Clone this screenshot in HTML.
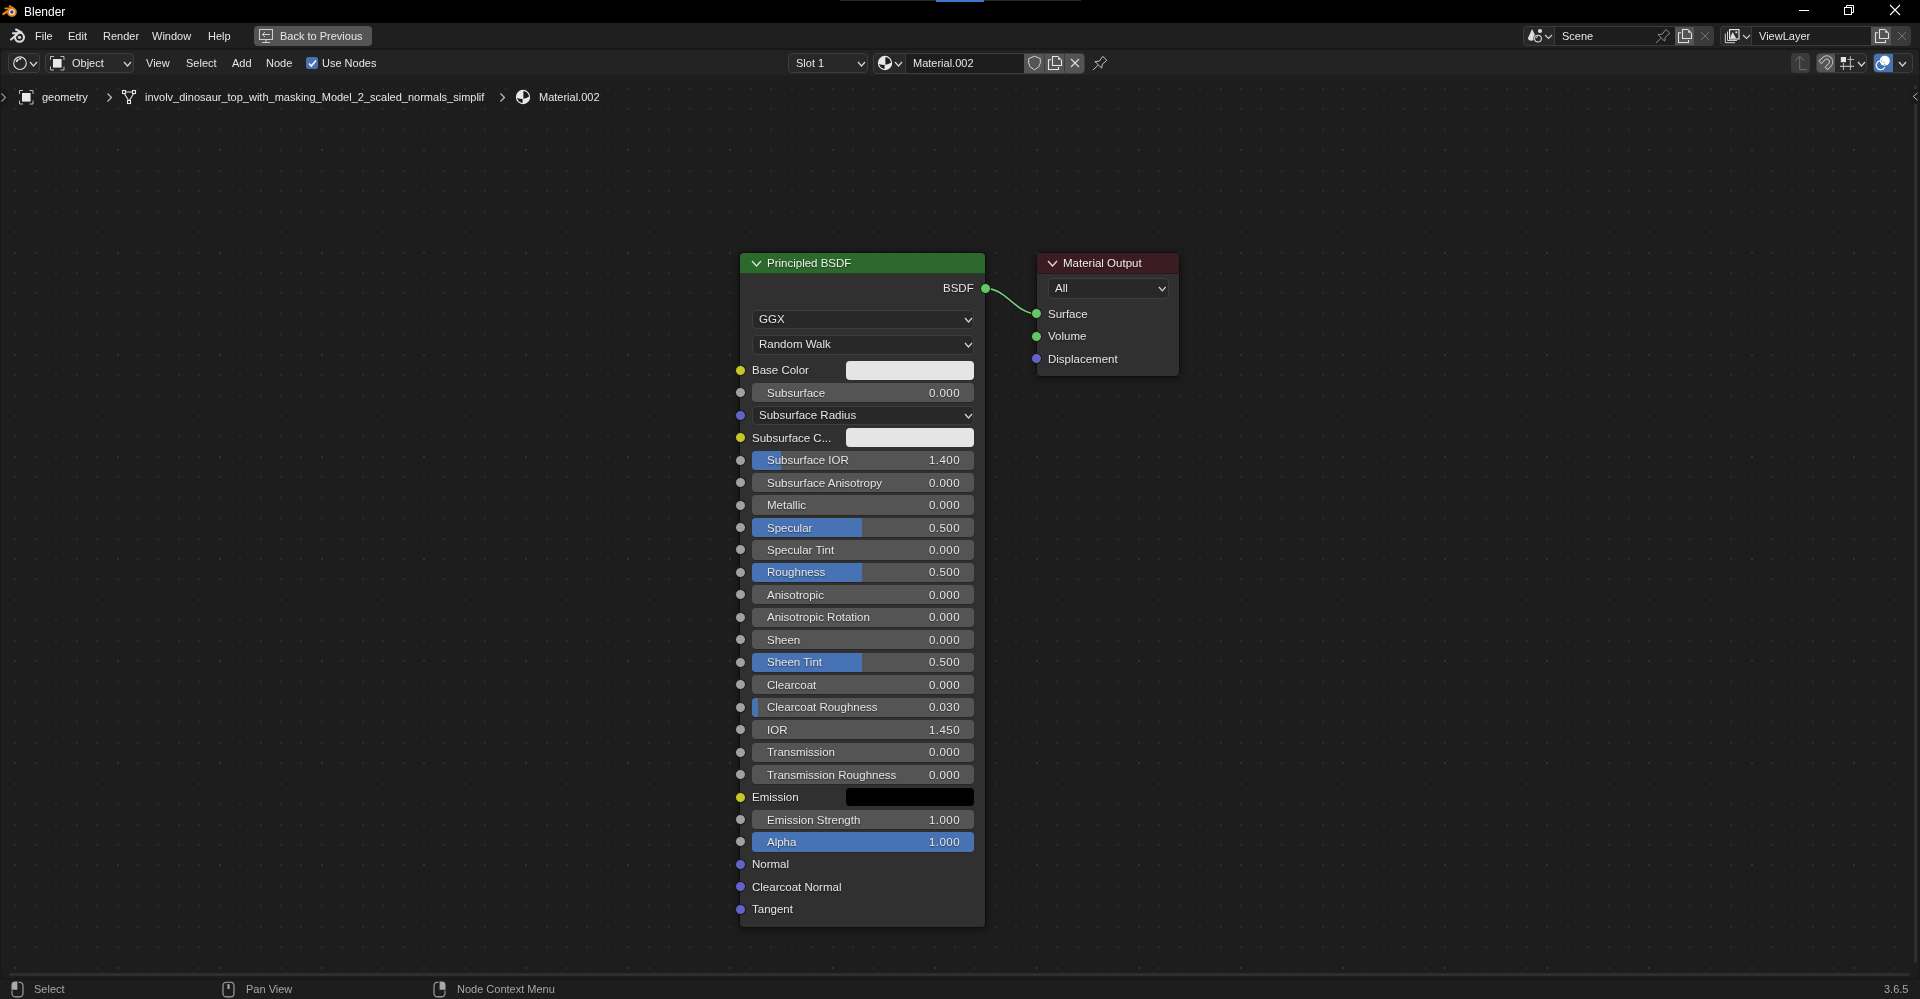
<!DOCTYPE html>
<html><head><meta charset="utf-8"><style>
html,body{margin:0;padding:0;width:1920px;height:999px;overflow:hidden;background:#181818;font-family:"Liberation Sans",sans-serif;}
.a{position:absolute;display:block}
.t{position:absolute;white-space:nowrap;color:#e6e6e6;will-change:transform;}
</style></head><body>
<div class="a" style="left:0px;top:0px;width:1920.00px;height:22.50px;background:#000;border-radius:0px;"></div>
<div class="a" style="left:840px;top:0px;width:241.00px;height:1.00px;background:#2a2a2a;border-radius:0px;"></div>
<div class="a" style="left:936px;top:0px;width:48.00px;height:1.50px;background:#3a78c8;border-radius:0px;"></div>
<svg class="a" style="left:0px;top:2px;" width="22" height="18" viewBox="0 0 22 18"><g stroke="#e2801c" stroke-linecap="round"><path d="M3.4 12 L9.8 7.6" stroke-width="2.3"/><path d="M5.3 6.4 L11 6.4" stroke-width="1.9"/><path d="M9.6 4 L13.2 6.2" stroke-width="1.9"/></g>
<circle cx="11.9" cy="10.1" r="4.9" fill="#e2801c"/><circle cx="11.9" cy="10.1" r="2.9" fill="#fff4e0"/><circle cx="11.9" cy="10.1" r="1.8" fill="#22507f"/></svg>
<div class="t" style="left:23.5px;top:6px;font-size:12px;line-height:12px;color:#ffffff;">Blender</div>
<div class="a" style="left:1799px;top:10px;width:10.00px;height:1.00px;background:#fff;border-radius:0px;"></div>
<svg class="a" style="left:1843px;top:4px;" width="13" height="12" viewBox="0 0 13 12"><g fill="none" stroke="#fff" stroke-width="1"><rect x="1.5" y="3.5" width="7" height="7"/><path d="M3.5 3.5 V1.5 H10.5 V8.5 H8.5"/></g></svg>
<svg class="a" style="left:1889px;top:4px;" width="13" height="13" viewBox="0 0 13 13"><g stroke="#fff" stroke-width="1.1"><path d="M1 1 L11 11 M11 1 L1 11"/></g></svg>
<div class="a" style="left:0px;top:22.5px;width:1920.00px;height:25.50px;background:#1f1f1f;border-radius:0px;"></div>
<svg class="a" style="left:8px;top:27px;" width="20" height="17" viewBox="0 0 20 17"><g fill="none" stroke="#dcdcdc" stroke-width="2.1" stroke-linecap="round"><circle cx="11.5" cy="10.3" r="4.5"/><path d="M3 12.5 L9 7.5"/><path d="M5 6.3 L10.5 6.3"/><path d="M8 2.5 L13.5 5.5"/></g><circle cx="11.5" cy="10.3" r="1.6" fill="#dcdcdc"/></svg>
<div class="t" style="left:35.4px;top:31px;font-size:11px;line-height:11px;color:#e6e6e6;">File</div>
<div class="t" style="left:68.2px;top:31px;font-size:11px;line-height:11px;color:#e6e6e6;">Edit</div>
<div class="t" style="left:102.6px;top:31px;font-size:11px;line-height:11px;color:#e6e6e6;">Render</div>
<div class="t" style="left:152px;top:31px;font-size:11px;line-height:11px;color:#e6e6e6;">Window</div>
<div class="t" style="left:207.5px;top:31px;font-size:11px;line-height:11px;color:#e6e6e6;">Help</div>
<div class="a" style="left:254.4px;top:26.2px;width:117.20px;height:19.60px;background:#545454;border-radius:4px;"></div>
<svg class="a" style="left:258px;top:28px;" width="17" height="16" viewBox="0 0 17 16"><g fill="none" stroke="#cfcfcf" stroke-width="1"><rect x="1.5" y="1.5" width="13" height="10"/><path d="M8 11.5 V14.5 M4 14.5 H12"/><path d="M12 6.5 H4.5 M7 4 L4.5 6.5 L7 9"/></g></svg>
<div class="t" style="left:280.4px;top:31px;font-size:11px;line-height:11px;color:#e6e6e6;">Back to Previous</div>
<div class="a" style="left:1523px;top:26.1px;width:191.00px;height:19.60px;background:#3a3a3a;border-radius:4px;"></div>
<div class="a" style="left:1524px;top:27.1px;width:30.50px;height:17.60px;background:#282828;border-radius:3px;border-top-right-radius:0;border-bottom-right-radius:0;"></div>
<div class="a" style="left:1554.5px;top:27.1px;width:120.00px;height:17.60px;background:#1d1d1d;border-radius:0px;"></div>
<div class="a" style="left:1554.0px;top:27.1px;width:1.00px;height:17.60px;background:#3a3a3a;border-radius:0px;"></div>
<div class="a" style="left:1674.5px;top:27.1px;width:19.80px;height:17.60px;background:#545454;border-radius:0px;"></div>
<div class="a" style="left:1694.3px;top:27.1px;width:18.70px;height:17.60px;background:#3a3a3a;border-radius:3px;border-top-left-radius:0;border-bottom-left-radius:0;"></div>
<svg class="a" style="left:1526px;top:27px" width="18" height="17" viewBox="0 0 18 17"><path d="M6 2 L1.8 11.5 Q2.5 13.8 5.5 13.8 Q7.5 13.6 8.5 12.5 L9.5 9 Z" fill="#dcdcdc"/><circle cx="14" cy="4" r="2.1" fill="#dcdcdc"/><circle cx="12" cy="11.6" r="4.6" fill="#282828"/><circle cx="12" cy="11.6" r="3.4" fill="none" stroke="#dcdcdc" stroke-width="1.1"/><path d="M10.3 11 A1.8 1.8 0 0 1 12 9.6" stroke="#dcdcdc" fill="none" stroke-width="0.9"/></svg>
<svg class="a" style="left:1544.2px;top:34px;" width="9" height="6" viewBox="0 0 9 6"><path d="M1 1 L4.5 4.5 L8 1" fill="none" stroke="#d0d0d0" stroke-width="1.1"/></svg>
<div class="t" style="left:1562px;top:31px;font-size:11px;line-height:11px;color:#e6e6e6;">Scene</div>
<svg class="a" style="left:1677.0px;top:28px;" width="16" height="16" viewBox="0 0 16 16"><g fill="none" stroke="#e0e0e0" stroke-width="1.1"><path d="M4 4.8 H1.5 V14.5 H11.5 V12"/><path d="M11.2 1.5 H5.5 V10.5 H14.5 V4.8"/></g><path d="M11.2 1.2 L14.8 4.8 H11.2 Z" fill="#e0e0e0"/></svg>
<svg class="a" style="left:1699.8999999999999px;top:31px;" width="11" height="11" viewBox="0 0 11 11"><path d="M1 1 L9 9 M9 1 L1 9" stroke="#747474" stroke-width="1"/></svg>
<svg class="a" style="left:1654.0px;top:26.799999999999997px;" width="18" height="18" viewBox="0 0 18 18"><g fill="none" stroke="#8c8c8c" stroke-width="1" stroke-linejoin="round" transform="translate(2 16)"><path d="M0 0 L4.8 -4.6"/><path d="M2 -8.4 L6.3 -8.9 L9.8 -13.6 L13.9 -9.7 L9.4 -5.9 L8.6 -1.8 Z"/></g></svg>
<div class="a" style="left:1720.3px;top:26.1px;width:191.10px;height:19.60px;background:#3a3a3a;border-radius:4px;"></div>
<div class="a" style="left:1721.3px;top:27.1px;width:30.50px;height:17.60px;background:#282828;border-radius:3px;border-top-right-radius:0;border-bottom-right-radius:0;"></div>
<div class="a" style="left:1751.8px;top:27.1px;width:119.50px;height:17.60px;background:#1d1d1d;border-radius:0px;"></div>
<div class="a" style="left:1751.3px;top:27.1px;width:1.00px;height:17.60px;background:#3a3a3a;border-radius:0px;"></div>
<div class="a" style="left:1871.3px;top:27.1px;width:19.70px;height:17.60px;background:#545454;border-radius:0px;"></div>
<div class="a" style="left:1891px;top:27.1px;width:19.40px;height:17.60px;background:#3a3a3a;border-radius:3px;border-top-left-radius:0;border-bottom-left-radius:0;"></div>
<svg class="a" style="left:1723px;top:28px" width="18" height="16" viewBox="0 0 18 16"><g fill="none" stroke="#d0d0d0" stroke-width="1"><path d="M4.5 3.5 V12.5 H14"/><path d="M2.3 5.5 V14.7 H12"/></g><rect x="6.6" y="1.6" width="9.4" height="9.4" fill="none" stroke="#e2e2e2" stroke-width="1.2"/><path d="M7 10.6 L9.6 4 L13.2 10.6 Z" fill="#e2e2e2"/><rect x="12.4" y="3.4" width="1.9" height="1.9" fill="#e2e2e2"/></svg>
<svg class="a" style="left:1741.5px;top:34px;" width="9" height="6" viewBox="0 0 9 6"><path d="M1 1 L4.5 4.5 L8 1" fill="none" stroke="#d0d0d0" stroke-width="1.1"/></svg>
<div class="t" style="left:1758.8px;top:31px;font-size:11px;line-height:11px;color:#e6e6e6;">ViewLayer</div>
<svg class="a" style="left:1873.8px;top:28px;" width="16" height="16" viewBox="0 0 16 16"><g fill="none" stroke="#e0e0e0" stroke-width="1.1"><path d="M4 4.8 H1.5 V14.5 H11.5 V12"/><path d="M11.2 1.5 H5.5 V10.5 H14.5 V4.8"/></g><path d="M11.2 1.2 L14.8 4.8 H11.2 Z" fill="#e0e0e0"/></svg>
<svg class="a" style="left:1896.6px;top:31px;" width="11" height="11" viewBox="0 0 11 11"><path d="M1 1 L9 9 M9 1 L1 9" stroke="#747474" stroke-width="1"/></svg>
<div class="a" style="left:1.2px;top:49.8px;width:1917.60px;height:25.20px;background:#232323;border-radius:4px;border-bottom-left-radius:0;border-bottom-right-radius:0;"></div>
<div class="a" style="left:8.4px;top:53.3px;width:29.40px;height:17.30px;background:#282828;border:1px solid #3d3d3d;border-radius:4px"></div>
<svg class="a" style="left:12px;top:55px;" width="16" height="16" viewBox="0 0 16 16"><circle cx="8" cy="8.2" r="6.3" fill="none" stroke="#e0e0e0" stroke-width="1.1"/><path d="M4.3 6.9 A3.9 3.9 0 0 1 6.5 4.4" stroke="#e8e8e8" stroke-width="1.7" fill="none"/><rect x="7.3" y="2.9" width="1.8" height="1.8" fill="#e8e8e8"/></svg>
<svg class="a" style="left:29px;top:61px;" width="9" height="6" viewBox="0 0 9 6"><path d="M1 1 L4.5 5 L8 1" fill="none" stroke="#d6d6d6" stroke-width="1.2"/></svg>
<div class="a" style="left:45.2px;top:53.3px;width:86.60px;height:17.30px;background:#282828;border:1px solid #3d3d3d;border-radius:4px"></div>
<svg class="a" style="left:49px;top:55px;" width="17" height="16" viewBox="0 0 17 16"><g fill="none" stroke="#bdbdbd" stroke-width="1"><path d="M1.5 5 V1.5 H5 M11.5 1.5 H15 V5 M15 11.5 V15 H11.5 M5 15 H1.5 V11.5"/></g><rect x="4" y="4" width="8.6" height="8.6" fill="#e8e8e8"/></svg>
<div class="t" style="left:71.5px;top:58px;font-size:11px;line-height:11px;color:#e6e6e6;">Object</div>
<svg class="a" style="left:123px;top:61px;" width="9" height="6" viewBox="0 0 9 6"><path d="M1 1 L4.5 5 L8 1" fill="none" stroke="#d6d6d6" stroke-width="1.2"/></svg>
<div class="t" style="left:145.9px;top:58px;font-size:11px;line-height:11px;color:#e6e6e6;">View</div>
<div class="t" style="left:186.2px;top:58px;font-size:11px;line-height:11px;color:#e6e6e6;">Select</div>
<div class="t" style="left:231.8px;top:58px;font-size:11px;line-height:11px;color:#e6e6e6;">Add</div>
<div class="t" style="left:266.3px;top:58px;font-size:11px;line-height:11px;color:#e6e6e6;">Node</div>
<div class="a" style="left:305.6px;top:57.2px;width:12.50px;height:12.10px;background:#4772b3;border-radius:2.5px;"></div>
<svg class="a" style="left:306px;top:57px;" width="13" height="13" viewBox="0 0 13 13"><path d="M3 6.5 L5.3 9 L10 3.5" fill="none" stroke="#fff" stroke-width="1.5"/></svg>
<div class="t" style="left:322.3px;top:58px;font-size:11px;line-height:11px;color:#e6e6e6;">Use Nodes</div>
<div class="a" style="left:788.4px;top:53.3px;width:77.20px;height:17.30px;background:#282828;border:1px solid #3d3d3d;border-radius:4px"></div>
<div class="t" style="left:796.4px;top:58px;font-size:11px;line-height:11px;color:#e6e6e6;">Slot 1</div>
<svg class="a" style="left:857px;top:61px;" width="9" height="6" viewBox="0 0 9 6"><path d="M1 1 L4.5 5 L8 1" fill="none" stroke="#d6d6d6" stroke-width="1.2"/></svg>
<div class="a" style="left:873.3px;top:53.3px;width:210.0px;height:18.3px;border:1px solid #3d3d3d;border-radius:4px;background:#282828;overflow:hidden"><div class="a" style="left:30.3px;top:0;width:120px;height:19px;background:#1d1d1d;border-left:1px solid #3a3a3a"></div><div class="a" style="left:150px;top:0;width:20px;height:19px;background:#545454"></div><div class="a" style="left:170px;top:0;width:19px;height:19px;background:#545454;border-left:1px solid #3c3c3c"></div><div class="a" style="left:190px;top:0;width:20px;height:19px;background:#545454;border-left:1px solid #3c3c3c"></div></div>
<svg class="a" style="left:877px;top:55px;" width="16" height="16" viewBox="0 0 16 16"><circle cx="8" cy="8" r="6.6" fill="#e8e8e8"/><path d="M8.4 1.6 L8.4 9.65 Q11.3 9.5 14.3 7.6 A6.3 6.3 0 0 0 8.4 1.6 Z" fill="#1f1f1f"/><path d="M7.6 10 L7.6 14.3 A6.3 6.3 0 0 1 1.8 9.0 Q4.7 10 7.6 10 Z" fill="#1f1f1f"/><circle cx="8" cy="8" r="6.6" fill="none" stroke="#e8e8e8" stroke-width="1.1"/></svg>
<svg class="a" style="left:894px;top:61px;" width="9" height="6" viewBox="0 0 9 6"><path d="M1 1 L4.5 5 L8 1" fill="none" stroke="#d6d6d6" stroke-width="1.2"/></svg>
<div class="t" style="left:912.6px;top:58px;font-size:11px;line-height:11px;color:#e6e6e6;">Material.002</div>
<svg class="a" style="left:1027px;top:55px;" width="16" height="16" viewBox="0 0 16 16"><path d="M7.5 1.2 L13.3 3.6 V8 Q13.3 12.2 7.5 14.8 Q1.7 12.2 1.7 8 V3.6 Z" fill="none" stroke="#d0d0d0" stroke-width="1"/></svg>
<svg class="a" style="left:1047px;top:55px;" width="16" height="16" viewBox="0 0 16 16"><g fill="none" stroke="#e6e6e6" stroke-width="1.1"><path d="M4 4.8 H1.5 V14.5 H11.5 V12"/><path d="M11.2 1.5 H5.5 V10.5 H14.5 V4.8"/></g><path d="M11.2 1.2 L14.8 4.8 H11.2 Z" fill="#e6e6e6"/></svg>
<svg class="a" style="left:1070px;top:58px;" width="10" height="10" viewBox="0 0 10 10"><path d="M1 1 L9 9 M9 1 L1 9" stroke="#e0e0e0" stroke-width="1.1"/></svg>
<svg class="a" style="left:1091.1px;top:53.7px;" width="18" height="18" viewBox="0 0 18 18"><g fill="none" stroke="#c4c4c4" stroke-width="1" stroke-linejoin="round" transform="translate(2 16)"><path d="M0 0 L4.8 -4.6"/><path d="M2 -8.4 L6.3 -8.9 L9.8 -13.6 L13.9 -9.7 L9.4 -5.9 L8.6 -1.8 Z"/></g></svg>
<div class="a" style="left:1791.3px;top:53.3px;width:18.90px;height:19.30px;background:#3a3a3a;border-radius:4px;"></div>
<svg class="a" style="left:1793px;top:55px;" width="16" height="16" viewBox="0 0 16 16"><path d="M6.7 1.6 V14.6 H13.7 M2.1 5.8 L6.7 1.2 L10.9 5.6" fill="none" stroke="#727272" stroke-width="1"/></svg>
<div class="a" style="left:1816.3px;top:53.3px;width:49.2px;height:17.3px;border:1px solid #3d3d3d;border-radius:4px;background:#282828;overflow:hidden"><div class="a" style="left:0;top:0;width:18px;height:18px;background:#545454"></div></div>
<svg class="a" style="left:1818px;top:55px;" width="16" height="16" viewBox="0 0 16 16"><g transform="translate(8.8 6.8) rotate(45)"><path d="M-6 5 L-6 0 A6 6 0 0 1 6 0 L6 5 L2.6 5 L2.6 0 A2.6 2.6 0 0 0 -2.6 0 L-2.6 5 Z" fill="none" stroke="#bdbdbd" stroke-width="1"/></g></svg>
<svg class="a" style="left:1838px;top:55px;" width="18" height="16" viewBox="0 0 18 16"><rect x="2.8" y="2" width="5.2" height="5.2" fill="#e6e6e6"/><path d="M5.5 8 V15 M12.4 1.2 V15 M9.5 4.5 H16 M2 11.4 H16" stroke="#b4b4b4" stroke-width="1.1" fill="none"/></svg>
<svg class="a" style="left:1857px;top:61px;" width="9" height="6" viewBox="0 0 9 6"><path d="M1 1 L4.5 5 L8 1" fill="none" stroke="#d6d6d6" stroke-width="1.2"/></svg>
<div class="a" style="left:1873px;top:53.3px;width:37.7px;height:17.3px;border:1px solid #3d3d3d;border-radius:4px;background:#282828;overflow:hidden"><div class="a" style="left:0;top:0;width:18.6px;height:18px;background:#4772b3"></div></div>
<svg class="a" style="left:1875px;top:55px;" width="17" height="16" viewBox="0 0 17 16"><circle cx="9.8" cy="5.7" r="5" fill="#fff"/><path d="M5.4 5.8 A4.5 4.5 0 1 0 9.8 12.3" fill="none" stroke="#fff" stroke-width="1.15"/><path d="M5.9 5.85 A4.5 4.5 0 0 1 9.9 10.1" fill="none" stroke="#4772b3" stroke-width="0.9" stroke-dasharray="1.3 1.1"/></svg>
<svg class="a" style="left:1897.5px;top:61px;" width="9" height="6" viewBox="0 0 9 6"><path d="M1 1 L4.5 5 L8 1" fill="none" stroke="#d6d6d6" stroke-width="1.2"/></svg>
<div class="a" style="left:1.2px;top:75px;width:1917.60px;height:902.60px;background:#1d1d1d;border-radius:6px;border-top-left-radius:0;border-top-right-radius:0;"></div>
<svg class="a" style="left:0;top:0" width="1920" height="999" viewBox="0 0 1920 999" shape-rendering="crispEdges"><path fill="#292929" d="M14 88h2v2h-2zM35 88h2v2h-2zM55 88h2v2h-2zM76 88h2v2h-2zM96 88h2v2h-2zM117 88h2v2h-2zM137 88h2v2h-2zM157 88h2v2h-2zM178 88h2v2h-2zM198 88h2v2h-2zM219 88h2v2h-2zM239 88h2v2h-2zM260 88h2v2h-2zM280 88h2v2h-2zM300 88h2v2h-2zM321 88h2v2h-2zM341 88h2v2h-2zM362 88h2v2h-2zM382 88h2v2h-2zM403 88h2v2h-2zM423 88h2v2h-2zM443 88h2v2h-2zM464 88h2v2h-2zM484 88h2v2h-2zM505 88h2v2h-2zM525 88h2v2h-2zM546 88h2v2h-2zM566 88h2v2h-2zM586 88h2v2h-2zM607 88h2v2h-2zM627 88h2v2h-2zM648 88h2v2h-2zM668 88h2v2h-2zM689 88h2v2h-2zM709 88h2v2h-2zM729 88h2v2h-2zM750 88h2v2h-2zM770 88h2v2h-2zM791 88h2v2h-2zM811 88h2v2h-2zM832 88h2v2h-2zM852 88h2v2h-2zM872 88h2v2h-2zM893 88h2v2h-2zM913 88h2v2h-2zM934 88h2v2h-2zM954 88h2v2h-2zM974 88h2v2h-2zM995 88h2v2h-2zM1015 88h2v2h-2zM1036 88h2v2h-2zM1056 88h2v2h-2zM1077 88h2v2h-2zM1097 88h2v2h-2zM1117 88h2v2h-2zM1138 88h2v2h-2zM1158 88h2v2h-2zM1179 88h2v2h-2zM1199 88h2v2h-2zM1220 88h2v2h-2zM1240 88h2v2h-2zM1260 88h2v2h-2zM1281 88h2v2h-2zM1301 88h2v2h-2zM1322 88h2v2h-2zM1342 88h2v2h-2zM1363 88h2v2h-2zM1383 88h2v2h-2zM1403 88h2v2h-2zM1424 88h2v2h-2zM1444 88h2v2h-2zM1465 88h2v2h-2zM1485 88h2v2h-2zM1506 88h2v2h-2zM1526 88h2v2h-2zM1546 88h2v2h-2zM1567 88h2v2h-2zM1587 88h2v2h-2zM1608 88h2v2h-2zM1628 88h2v2h-2zM1648 88h2v2h-2zM1669 88h2v2h-2zM1689 88h2v2h-2zM1710 88h2v2h-2zM1730 88h2v2h-2zM1751 88h2v2h-2zM1771 88h2v2h-2zM1791 88h2v2h-2zM1812 88h2v2h-2zM1832 88h2v2h-2zM1853 88h2v2h-2zM1873 88h2v2h-2zM1894 88h2v2h-2zM14 108h2v2h-2zM35 108h2v2h-2zM55 108h2v2h-2zM76 108h2v2h-2zM96 108h2v2h-2zM117 108h2v2h-2zM137 108h2v2h-2zM157 108h2v2h-2zM178 108h2v2h-2zM198 108h2v2h-2zM219 108h2v2h-2zM239 108h2v2h-2zM260 108h2v2h-2zM280 108h2v2h-2zM300 108h2v2h-2zM321 108h2v2h-2zM341 108h2v2h-2zM362 108h2v2h-2zM382 108h2v2h-2zM403 108h2v2h-2zM423 108h2v2h-2zM443 108h2v2h-2zM464 108h2v2h-2zM484 108h2v2h-2zM505 108h2v2h-2zM525 108h2v2h-2zM546 108h2v2h-2zM566 108h2v2h-2zM586 108h2v2h-2zM607 108h2v2h-2zM627 108h2v2h-2zM648 108h2v2h-2zM668 108h2v2h-2zM689 108h2v2h-2zM709 108h2v2h-2zM729 108h2v2h-2zM750 108h2v2h-2zM770 108h2v2h-2zM791 108h2v2h-2zM811 108h2v2h-2zM832 108h2v2h-2zM852 108h2v2h-2zM872 108h2v2h-2zM893 108h2v2h-2zM913 108h2v2h-2zM934 108h2v2h-2zM954 108h2v2h-2zM974 108h2v2h-2zM995 108h2v2h-2zM1015 108h2v2h-2zM1036 108h2v2h-2zM1056 108h2v2h-2zM1077 108h2v2h-2zM1097 108h2v2h-2zM1117 108h2v2h-2zM1138 108h2v2h-2zM1158 108h2v2h-2zM1179 108h2v2h-2zM1199 108h2v2h-2zM1220 108h2v2h-2zM1240 108h2v2h-2zM1260 108h2v2h-2zM1281 108h2v2h-2zM1301 108h2v2h-2zM1322 108h2v2h-2zM1342 108h2v2h-2zM1363 108h2v2h-2zM1383 108h2v2h-2zM1403 108h2v2h-2zM1424 108h2v2h-2zM1444 108h2v2h-2zM1465 108h2v2h-2zM1485 108h2v2h-2zM1506 108h2v2h-2zM1526 108h2v2h-2zM1546 108h2v2h-2zM1567 108h2v2h-2zM1587 108h2v2h-2zM1608 108h2v2h-2zM1628 108h2v2h-2zM1648 108h2v2h-2zM1669 108h2v2h-2zM1689 108h2v2h-2zM1710 108h2v2h-2zM1730 108h2v2h-2zM1751 108h2v2h-2zM1771 108h2v2h-2zM1791 108h2v2h-2zM1812 108h2v2h-2zM1832 108h2v2h-2zM1853 108h2v2h-2zM1873 108h2v2h-2zM1894 108h2v2h-2zM14 129h2v2h-2zM35 129h2v2h-2zM55 129h2v2h-2zM76 129h2v2h-2zM96 129h2v2h-2zM117 129h2v2h-2zM137 129h2v2h-2zM157 129h2v2h-2zM178 129h2v2h-2zM198 129h2v2h-2zM219 129h2v2h-2zM239 129h2v2h-2zM260 129h2v2h-2zM280 129h2v2h-2zM300 129h2v2h-2zM321 129h2v2h-2zM341 129h2v2h-2zM362 129h2v2h-2zM382 129h2v2h-2zM403 129h2v2h-2zM423 129h2v2h-2zM443 129h2v2h-2zM464 129h2v2h-2zM484 129h2v2h-2zM505 129h2v2h-2zM525 129h2v2h-2zM546 129h2v2h-2zM566 129h2v2h-2zM586 129h2v2h-2zM607 129h2v2h-2zM627 129h2v2h-2zM648 129h2v2h-2zM668 129h2v2h-2zM689 129h2v2h-2zM709 129h2v2h-2zM729 129h2v2h-2zM750 129h2v2h-2zM770 129h2v2h-2zM791 129h2v2h-2zM811 129h2v2h-2zM832 129h2v2h-2zM852 129h2v2h-2zM872 129h2v2h-2zM893 129h2v2h-2zM913 129h2v2h-2zM934 129h2v2h-2zM954 129h2v2h-2zM974 129h2v2h-2zM995 129h2v2h-2zM1015 129h2v2h-2zM1036 129h2v2h-2zM1056 129h2v2h-2zM1077 129h2v2h-2zM1097 129h2v2h-2zM1117 129h2v2h-2zM1138 129h2v2h-2zM1158 129h2v2h-2zM1179 129h2v2h-2zM1199 129h2v2h-2zM1220 129h2v2h-2zM1240 129h2v2h-2zM1260 129h2v2h-2zM1281 129h2v2h-2zM1301 129h2v2h-2zM1322 129h2v2h-2zM1342 129h2v2h-2zM1363 129h2v2h-2zM1383 129h2v2h-2zM1403 129h2v2h-2zM1424 129h2v2h-2zM1444 129h2v2h-2zM1465 129h2v2h-2zM1485 129h2v2h-2zM1506 129h2v2h-2zM1526 129h2v2h-2zM1546 129h2v2h-2zM1567 129h2v2h-2zM1587 129h2v2h-2zM1608 129h2v2h-2zM1628 129h2v2h-2zM1648 129h2v2h-2zM1669 129h2v2h-2zM1689 129h2v2h-2zM1710 129h2v2h-2zM1730 129h2v2h-2zM1751 129h2v2h-2zM1771 129h2v2h-2zM1791 129h2v2h-2zM1812 129h2v2h-2zM1832 129h2v2h-2zM1853 129h2v2h-2zM1873 129h2v2h-2zM1894 129h2v2h-2zM35 149h2v2h-2zM55 149h2v2h-2zM76 149h2v2h-2zM96 149h2v2h-2zM137 149h2v2h-2zM157 149h2v2h-2zM178 149h2v2h-2zM198 149h2v2h-2zM239 149h2v2h-2zM260 149h2v2h-2zM280 149h2v2h-2zM300 149h2v2h-2zM341 149h2v2h-2zM362 149h2v2h-2zM382 149h2v2h-2zM403 149h2v2h-2zM443 149h2v2h-2zM464 149h2v2h-2zM484 149h2v2h-2zM505 149h2v2h-2zM546 149h2v2h-2zM566 149h2v2h-2zM586 149h2v2h-2zM607 149h2v2h-2zM648 149h2v2h-2zM668 149h2v2h-2zM689 149h2v2h-2zM709 149h2v2h-2zM750 149h2v2h-2zM770 149h2v2h-2zM791 149h2v2h-2zM811 149h2v2h-2zM852 149h2v2h-2zM872 149h2v2h-2zM893 149h2v2h-2zM913 149h2v2h-2zM954 149h2v2h-2zM974 149h2v2h-2zM995 149h2v2h-2zM1015 149h2v2h-2zM1056 149h2v2h-2zM1077 149h2v2h-2zM1097 149h2v2h-2zM1117 149h2v2h-2zM1158 149h2v2h-2zM1179 149h2v2h-2zM1199 149h2v2h-2zM1220 149h2v2h-2zM1260 149h2v2h-2zM1281 149h2v2h-2zM1301 149h2v2h-2zM1322 149h2v2h-2zM1363 149h2v2h-2zM1383 149h2v2h-2zM1403 149h2v2h-2zM1424 149h2v2h-2zM1465 149h2v2h-2zM1485 149h2v2h-2zM1506 149h2v2h-2zM1526 149h2v2h-2zM1567 149h2v2h-2zM1587 149h2v2h-2zM1608 149h2v2h-2zM1628 149h2v2h-2zM1669 149h2v2h-2zM1689 149h2v2h-2zM1710 149h2v2h-2zM1730 149h2v2h-2zM1771 149h2v2h-2zM1791 149h2v2h-2zM1812 149h2v2h-2zM1832 149h2v2h-2zM1873 149h2v2h-2zM1894 149h2v2h-2zM14 170h2v2h-2zM35 170h2v2h-2zM55 170h2v2h-2zM76 170h2v2h-2zM96 170h2v2h-2zM117 170h2v2h-2zM137 170h2v2h-2zM157 170h2v2h-2zM178 170h2v2h-2zM198 170h2v2h-2zM219 170h2v2h-2zM239 170h2v2h-2zM260 170h2v2h-2zM280 170h2v2h-2zM300 170h2v2h-2zM321 170h2v2h-2zM341 170h2v2h-2zM362 170h2v2h-2zM382 170h2v2h-2zM403 170h2v2h-2zM423 170h2v2h-2zM443 170h2v2h-2zM464 170h2v2h-2zM484 170h2v2h-2zM505 170h2v2h-2zM525 170h2v2h-2zM546 170h2v2h-2zM566 170h2v2h-2zM586 170h2v2h-2zM607 170h2v2h-2zM627 170h2v2h-2zM648 170h2v2h-2zM668 170h2v2h-2zM689 170h2v2h-2zM709 170h2v2h-2zM729 170h2v2h-2zM750 170h2v2h-2zM770 170h2v2h-2zM791 170h2v2h-2zM811 170h2v2h-2zM832 170h2v2h-2zM852 170h2v2h-2zM872 170h2v2h-2zM893 170h2v2h-2zM913 170h2v2h-2zM934 170h2v2h-2zM954 170h2v2h-2zM974 170h2v2h-2zM995 170h2v2h-2zM1015 170h2v2h-2zM1036 170h2v2h-2zM1056 170h2v2h-2zM1077 170h2v2h-2zM1097 170h2v2h-2zM1117 170h2v2h-2zM1138 170h2v2h-2zM1158 170h2v2h-2zM1179 170h2v2h-2zM1199 170h2v2h-2zM1220 170h2v2h-2zM1240 170h2v2h-2zM1260 170h2v2h-2zM1281 170h2v2h-2zM1301 170h2v2h-2zM1322 170h2v2h-2zM1342 170h2v2h-2zM1363 170h2v2h-2zM1383 170h2v2h-2zM1403 170h2v2h-2zM1424 170h2v2h-2zM1444 170h2v2h-2zM1465 170h2v2h-2zM1485 170h2v2h-2zM1506 170h2v2h-2zM1526 170h2v2h-2zM1546 170h2v2h-2zM1567 170h2v2h-2zM1587 170h2v2h-2zM1608 170h2v2h-2zM1628 170h2v2h-2zM1648 170h2v2h-2zM1669 170h2v2h-2zM1689 170h2v2h-2zM1710 170h2v2h-2zM1730 170h2v2h-2zM1751 170h2v2h-2zM1771 170h2v2h-2zM1791 170h2v2h-2zM1812 170h2v2h-2zM1832 170h2v2h-2zM1853 170h2v2h-2zM1873 170h2v2h-2zM1894 170h2v2h-2zM14 190h2v2h-2zM35 190h2v2h-2zM55 190h2v2h-2zM76 190h2v2h-2zM96 190h2v2h-2zM117 190h2v2h-2zM137 190h2v2h-2zM157 190h2v2h-2zM178 190h2v2h-2zM198 190h2v2h-2zM219 190h2v2h-2zM239 190h2v2h-2zM260 190h2v2h-2zM280 190h2v2h-2zM300 190h2v2h-2zM321 190h2v2h-2zM341 190h2v2h-2zM362 190h2v2h-2zM382 190h2v2h-2zM403 190h2v2h-2zM423 190h2v2h-2zM443 190h2v2h-2zM464 190h2v2h-2zM484 190h2v2h-2zM505 190h2v2h-2zM525 190h2v2h-2zM546 190h2v2h-2zM566 190h2v2h-2zM586 190h2v2h-2zM607 190h2v2h-2zM627 190h2v2h-2zM648 190h2v2h-2zM668 190h2v2h-2zM689 190h2v2h-2zM709 190h2v2h-2zM729 190h2v2h-2zM750 190h2v2h-2zM770 190h2v2h-2zM791 190h2v2h-2zM811 190h2v2h-2zM832 190h2v2h-2zM852 190h2v2h-2zM872 190h2v2h-2zM893 190h2v2h-2zM913 190h2v2h-2zM934 190h2v2h-2zM954 190h2v2h-2zM974 190h2v2h-2zM995 190h2v2h-2zM1015 190h2v2h-2zM1036 190h2v2h-2zM1056 190h2v2h-2zM1077 190h2v2h-2zM1097 190h2v2h-2zM1117 190h2v2h-2zM1138 190h2v2h-2zM1158 190h2v2h-2zM1179 190h2v2h-2zM1199 190h2v2h-2zM1220 190h2v2h-2zM1240 190h2v2h-2zM1260 190h2v2h-2zM1281 190h2v2h-2zM1301 190h2v2h-2zM1322 190h2v2h-2zM1342 190h2v2h-2zM1363 190h2v2h-2zM1383 190h2v2h-2zM1403 190h2v2h-2zM1424 190h2v2h-2zM1444 190h2v2h-2zM1465 190h2v2h-2zM1485 190h2v2h-2zM1506 190h2v2h-2zM1526 190h2v2h-2zM1546 190h2v2h-2zM1567 190h2v2h-2zM1587 190h2v2h-2zM1608 190h2v2h-2zM1628 190h2v2h-2zM1648 190h2v2h-2zM1669 190h2v2h-2zM1689 190h2v2h-2zM1710 190h2v2h-2zM1730 190h2v2h-2zM1751 190h2v2h-2zM1771 190h2v2h-2zM1791 190h2v2h-2zM1812 190h2v2h-2zM1832 190h2v2h-2zM1853 190h2v2h-2zM1873 190h2v2h-2zM1894 190h2v2h-2zM14 211h2v2h-2zM35 211h2v2h-2zM55 211h2v2h-2zM76 211h2v2h-2zM96 211h2v2h-2zM117 211h2v2h-2zM137 211h2v2h-2zM157 211h2v2h-2zM178 211h2v2h-2zM198 211h2v2h-2zM219 211h2v2h-2zM239 211h2v2h-2zM260 211h2v2h-2zM280 211h2v2h-2zM300 211h2v2h-2zM321 211h2v2h-2zM341 211h2v2h-2zM362 211h2v2h-2zM382 211h2v2h-2zM403 211h2v2h-2zM423 211h2v2h-2zM443 211h2v2h-2zM464 211h2v2h-2zM484 211h2v2h-2zM505 211h2v2h-2zM525 211h2v2h-2zM546 211h2v2h-2zM566 211h2v2h-2zM586 211h2v2h-2zM607 211h2v2h-2zM627 211h2v2h-2zM648 211h2v2h-2zM668 211h2v2h-2zM689 211h2v2h-2zM709 211h2v2h-2zM729 211h2v2h-2zM750 211h2v2h-2zM770 211h2v2h-2zM791 211h2v2h-2zM811 211h2v2h-2zM832 211h2v2h-2zM852 211h2v2h-2zM872 211h2v2h-2zM893 211h2v2h-2zM913 211h2v2h-2zM934 211h2v2h-2zM954 211h2v2h-2zM974 211h2v2h-2zM995 211h2v2h-2zM1015 211h2v2h-2zM1036 211h2v2h-2zM1056 211h2v2h-2zM1077 211h2v2h-2zM1097 211h2v2h-2zM1117 211h2v2h-2zM1138 211h2v2h-2zM1158 211h2v2h-2zM1179 211h2v2h-2zM1199 211h2v2h-2zM1220 211h2v2h-2zM1240 211h2v2h-2zM1260 211h2v2h-2zM1281 211h2v2h-2zM1301 211h2v2h-2zM1322 211h2v2h-2zM1342 211h2v2h-2zM1363 211h2v2h-2zM1383 211h2v2h-2zM1403 211h2v2h-2zM1424 211h2v2h-2zM1444 211h2v2h-2zM1465 211h2v2h-2zM1485 211h2v2h-2zM1506 211h2v2h-2zM1526 211h2v2h-2zM1546 211h2v2h-2zM1567 211h2v2h-2zM1587 211h2v2h-2zM1608 211h2v2h-2zM1628 211h2v2h-2zM1648 211h2v2h-2zM1669 211h2v2h-2zM1689 211h2v2h-2zM1710 211h2v2h-2zM1730 211h2v2h-2zM1751 211h2v2h-2zM1771 211h2v2h-2zM1791 211h2v2h-2zM1812 211h2v2h-2zM1832 211h2v2h-2zM1853 211h2v2h-2zM1873 211h2v2h-2zM1894 211h2v2h-2zM14 231h2v2h-2zM35 231h2v2h-2zM55 231h2v2h-2zM76 231h2v2h-2zM96 231h2v2h-2zM117 231h2v2h-2zM137 231h2v2h-2zM157 231h2v2h-2zM178 231h2v2h-2zM198 231h2v2h-2zM219 231h2v2h-2zM239 231h2v2h-2zM260 231h2v2h-2zM280 231h2v2h-2zM300 231h2v2h-2zM321 231h2v2h-2zM341 231h2v2h-2zM362 231h2v2h-2zM382 231h2v2h-2zM403 231h2v2h-2zM423 231h2v2h-2zM443 231h2v2h-2zM464 231h2v2h-2zM484 231h2v2h-2zM505 231h2v2h-2zM525 231h2v2h-2zM546 231h2v2h-2zM566 231h2v2h-2zM586 231h2v2h-2zM607 231h2v2h-2zM627 231h2v2h-2zM648 231h2v2h-2zM668 231h2v2h-2zM689 231h2v2h-2zM709 231h2v2h-2zM729 231h2v2h-2zM750 231h2v2h-2zM770 231h2v2h-2zM791 231h2v2h-2zM811 231h2v2h-2zM832 231h2v2h-2zM852 231h2v2h-2zM872 231h2v2h-2zM893 231h2v2h-2zM913 231h2v2h-2zM934 231h2v2h-2zM954 231h2v2h-2zM974 231h2v2h-2zM995 231h2v2h-2zM1015 231h2v2h-2zM1036 231h2v2h-2zM1056 231h2v2h-2zM1077 231h2v2h-2zM1097 231h2v2h-2zM1117 231h2v2h-2zM1138 231h2v2h-2zM1158 231h2v2h-2zM1179 231h2v2h-2zM1199 231h2v2h-2zM1220 231h2v2h-2zM1240 231h2v2h-2zM1260 231h2v2h-2zM1281 231h2v2h-2zM1301 231h2v2h-2zM1322 231h2v2h-2zM1342 231h2v2h-2zM1363 231h2v2h-2zM1383 231h2v2h-2zM1403 231h2v2h-2zM1424 231h2v2h-2zM1444 231h2v2h-2zM1465 231h2v2h-2zM1485 231h2v2h-2zM1506 231h2v2h-2zM1526 231h2v2h-2zM1546 231h2v2h-2zM1567 231h2v2h-2zM1587 231h2v2h-2zM1608 231h2v2h-2zM1628 231h2v2h-2zM1648 231h2v2h-2zM1669 231h2v2h-2zM1689 231h2v2h-2zM1710 231h2v2h-2zM1730 231h2v2h-2zM1751 231h2v2h-2zM1771 231h2v2h-2zM1791 231h2v2h-2zM1812 231h2v2h-2zM1832 231h2v2h-2zM1853 231h2v2h-2zM1873 231h2v2h-2zM1894 231h2v2h-2zM35 252h2v2h-2zM55 252h2v2h-2zM76 252h2v2h-2zM96 252h2v2h-2zM137 252h2v2h-2zM157 252h2v2h-2zM178 252h2v2h-2zM198 252h2v2h-2zM239 252h2v2h-2zM260 252h2v2h-2zM280 252h2v2h-2zM300 252h2v2h-2zM341 252h2v2h-2zM362 252h2v2h-2zM382 252h2v2h-2zM403 252h2v2h-2zM443 252h2v2h-2zM464 252h2v2h-2zM484 252h2v2h-2zM505 252h2v2h-2zM546 252h2v2h-2zM566 252h2v2h-2zM586 252h2v2h-2zM607 252h2v2h-2zM648 252h2v2h-2zM668 252h2v2h-2zM689 252h2v2h-2zM709 252h2v2h-2zM750 252h2v2h-2zM770 252h2v2h-2zM791 252h2v2h-2zM811 252h2v2h-2zM852 252h2v2h-2zM872 252h2v2h-2zM893 252h2v2h-2zM913 252h2v2h-2zM954 252h2v2h-2zM974 252h2v2h-2zM995 252h2v2h-2zM1015 252h2v2h-2zM1056 252h2v2h-2zM1077 252h2v2h-2zM1097 252h2v2h-2zM1117 252h2v2h-2zM1158 252h2v2h-2zM1179 252h2v2h-2zM1199 252h2v2h-2zM1220 252h2v2h-2zM1260 252h2v2h-2zM1281 252h2v2h-2zM1301 252h2v2h-2zM1322 252h2v2h-2zM1363 252h2v2h-2zM1383 252h2v2h-2zM1403 252h2v2h-2zM1424 252h2v2h-2zM1465 252h2v2h-2zM1485 252h2v2h-2zM1506 252h2v2h-2zM1526 252h2v2h-2zM1567 252h2v2h-2zM1587 252h2v2h-2zM1608 252h2v2h-2zM1628 252h2v2h-2zM1669 252h2v2h-2zM1689 252h2v2h-2zM1710 252h2v2h-2zM1730 252h2v2h-2zM1771 252h2v2h-2zM1791 252h2v2h-2zM1812 252h2v2h-2zM1832 252h2v2h-2zM1873 252h2v2h-2zM1894 252h2v2h-2zM14 272h2v2h-2zM35 272h2v2h-2zM55 272h2v2h-2zM76 272h2v2h-2zM96 272h2v2h-2zM117 272h2v2h-2zM137 272h2v2h-2zM157 272h2v2h-2zM178 272h2v2h-2zM198 272h2v2h-2zM219 272h2v2h-2zM239 272h2v2h-2zM260 272h2v2h-2zM280 272h2v2h-2zM300 272h2v2h-2zM321 272h2v2h-2zM341 272h2v2h-2zM362 272h2v2h-2zM382 272h2v2h-2zM403 272h2v2h-2zM423 272h2v2h-2zM443 272h2v2h-2zM464 272h2v2h-2zM484 272h2v2h-2zM505 272h2v2h-2zM525 272h2v2h-2zM546 272h2v2h-2zM566 272h2v2h-2zM586 272h2v2h-2zM607 272h2v2h-2zM627 272h2v2h-2zM648 272h2v2h-2zM668 272h2v2h-2zM689 272h2v2h-2zM709 272h2v2h-2zM729 272h2v2h-2zM750 272h2v2h-2zM770 272h2v2h-2zM791 272h2v2h-2zM811 272h2v2h-2zM832 272h2v2h-2zM852 272h2v2h-2zM872 272h2v2h-2zM893 272h2v2h-2zM913 272h2v2h-2zM934 272h2v2h-2zM954 272h2v2h-2zM974 272h2v2h-2zM995 272h2v2h-2zM1015 272h2v2h-2zM1036 272h2v2h-2zM1056 272h2v2h-2zM1077 272h2v2h-2zM1097 272h2v2h-2zM1117 272h2v2h-2zM1138 272h2v2h-2zM1158 272h2v2h-2zM1179 272h2v2h-2zM1199 272h2v2h-2zM1220 272h2v2h-2zM1240 272h2v2h-2zM1260 272h2v2h-2zM1281 272h2v2h-2zM1301 272h2v2h-2zM1322 272h2v2h-2zM1342 272h2v2h-2zM1363 272h2v2h-2zM1383 272h2v2h-2zM1403 272h2v2h-2zM1424 272h2v2h-2zM1444 272h2v2h-2zM1465 272h2v2h-2zM1485 272h2v2h-2zM1506 272h2v2h-2zM1526 272h2v2h-2zM1546 272h2v2h-2zM1567 272h2v2h-2zM1587 272h2v2h-2zM1608 272h2v2h-2zM1628 272h2v2h-2zM1648 272h2v2h-2zM1669 272h2v2h-2zM1689 272h2v2h-2zM1710 272h2v2h-2zM1730 272h2v2h-2zM1751 272h2v2h-2zM1771 272h2v2h-2zM1791 272h2v2h-2zM1812 272h2v2h-2zM1832 272h2v2h-2zM1853 272h2v2h-2zM1873 272h2v2h-2zM1894 272h2v2h-2zM14 292h2v2h-2zM35 292h2v2h-2zM55 292h2v2h-2zM76 292h2v2h-2zM96 292h2v2h-2zM117 292h2v2h-2zM137 292h2v2h-2zM157 292h2v2h-2zM178 292h2v2h-2zM198 292h2v2h-2zM219 292h2v2h-2zM239 292h2v2h-2zM260 292h2v2h-2zM280 292h2v2h-2zM300 292h2v2h-2zM321 292h2v2h-2zM341 292h2v2h-2zM362 292h2v2h-2zM382 292h2v2h-2zM403 292h2v2h-2zM423 292h2v2h-2zM443 292h2v2h-2zM464 292h2v2h-2zM484 292h2v2h-2zM505 292h2v2h-2zM525 292h2v2h-2zM546 292h2v2h-2zM566 292h2v2h-2zM586 292h2v2h-2zM607 292h2v2h-2zM627 292h2v2h-2zM648 292h2v2h-2zM668 292h2v2h-2zM689 292h2v2h-2zM709 292h2v2h-2zM729 292h2v2h-2zM750 292h2v2h-2zM770 292h2v2h-2zM791 292h2v2h-2zM811 292h2v2h-2zM832 292h2v2h-2zM852 292h2v2h-2zM872 292h2v2h-2zM893 292h2v2h-2zM913 292h2v2h-2zM934 292h2v2h-2zM954 292h2v2h-2zM974 292h2v2h-2zM995 292h2v2h-2zM1015 292h2v2h-2zM1036 292h2v2h-2zM1056 292h2v2h-2zM1077 292h2v2h-2zM1097 292h2v2h-2zM1117 292h2v2h-2zM1138 292h2v2h-2zM1158 292h2v2h-2zM1179 292h2v2h-2zM1199 292h2v2h-2zM1220 292h2v2h-2zM1240 292h2v2h-2zM1260 292h2v2h-2zM1281 292h2v2h-2zM1301 292h2v2h-2zM1322 292h2v2h-2zM1342 292h2v2h-2zM1363 292h2v2h-2zM1383 292h2v2h-2zM1403 292h2v2h-2zM1424 292h2v2h-2zM1444 292h2v2h-2zM1465 292h2v2h-2zM1485 292h2v2h-2zM1506 292h2v2h-2zM1526 292h2v2h-2zM1546 292h2v2h-2zM1567 292h2v2h-2zM1587 292h2v2h-2zM1608 292h2v2h-2zM1628 292h2v2h-2zM1648 292h2v2h-2zM1669 292h2v2h-2zM1689 292h2v2h-2zM1710 292h2v2h-2zM1730 292h2v2h-2zM1751 292h2v2h-2zM1771 292h2v2h-2zM1791 292h2v2h-2zM1812 292h2v2h-2zM1832 292h2v2h-2zM1853 292h2v2h-2zM1873 292h2v2h-2zM1894 292h2v2h-2zM14 313h2v2h-2zM35 313h2v2h-2zM55 313h2v2h-2zM76 313h2v2h-2zM96 313h2v2h-2zM117 313h2v2h-2zM137 313h2v2h-2zM157 313h2v2h-2zM178 313h2v2h-2zM198 313h2v2h-2zM219 313h2v2h-2zM239 313h2v2h-2zM260 313h2v2h-2zM280 313h2v2h-2zM300 313h2v2h-2zM321 313h2v2h-2zM341 313h2v2h-2zM362 313h2v2h-2zM382 313h2v2h-2zM403 313h2v2h-2zM423 313h2v2h-2zM443 313h2v2h-2zM464 313h2v2h-2zM484 313h2v2h-2zM505 313h2v2h-2zM525 313h2v2h-2zM546 313h2v2h-2zM566 313h2v2h-2zM586 313h2v2h-2zM607 313h2v2h-2zM627 313h2v2h-2zM648 313h2v2h-2zM668 313h2v2h-2zM689 313h2v2h-2zM709 313h2v2h-2zM729 313h2v2h-2zM750 313h2v2h-2zM770 313h2v2h-2zM791 313h2v2h-2zM811 313h2v2h-2zM832 313h2v2h-2zM852 313h2v2h-2zM872 313h2v2h-2zM893 313h2v2h-2zM913 313h2v2h-2zM934 313h2v2h-2zM954 313h2v2h-2zM974 313h2v2h-2zM995 313h2v2h-2zM1015 313h2v2h-2zM1036 313h2v2h-2zM1056 313h2v2h-2zM1077 313h2v2h-2zM1097 313h2v2h-2zM1117 313h2v2h-2zM1138 313h2v2h-2zM1158 313h2v2h-2zM1179 313h2v2h-2zM1199 313h2v2h-2zM1220 313h2v2h-2zM1240 313h2v2h-2zM1260 313h2v2h-2zM1281 313h2v2h-2zM1301 313h2v2h-2zM1322 313h2v2h-2zM1342 313h2v2h-2zM1363 313h2v2h-2zM1383 313h2v2h-2zM1403 313h2v2h-2zM1424 313h2v2h-2zM1444 313h2v2h-2zM1465 313h2v2h-2zM1485 313h2v2h-2zM1506 313h2v2h-2zM1526 313h2v2h-2zM1546 313h2v2h-2zM1567 313h2v2h-2zM1587 313h2v2h-2zM1608 313h2v2h-2zM1628 313h2v2h-2zM1648 313h2v2h-2zM1669 313h2v2h-2zM1689 313h2v2h-2zM1710 313h2v2h-2zM1730 313h2v2h-2zM1751 313h2v2h-2zM1771 313h2v2h-2zM1791 313h2v2h-2zM1812 313h2v2h-2zM1832 313h2v2h-2zM1853 313h2v2h-2zM1873 313h2v2h-2zM1894 313h2v2h-2zM14 333h2v2h-2zM35 333h2v2h-2zM55 333h2v2h-2zM76 333h2v2h-2zM96 333h2v2h-2zM117 333h2v2h-2zM137 333h2v2h-2zM157 333h2v2h-2zM178 333h2v2h-2zM198 333h2v2h-2zM219 333h2v2h-2zM239 333h2v2h-2zM260 333h2v2h-2zM280 333h2v2h-2zM300 333h2v2h-2zM321 333h2v2h-2zM341 333h2v2h-2zM362 333h2v2h-2zM382 333h2v2h-2zM403 333h2v2h-2zM423 333h2v2h-2zM443 333h2v2h-2zM464 333h2v2h-2zM484 333h2v2h-2zM505 333h2v2h-2zM525 333h2v2h-2zM546 333h2v2h-2zM566 333h2v2h-2zM586 333h2v2h-2zM607 333h2v2h-2zM627 333h2v2h-2zM648 333h2v2h-2zM668 333h2v2h-2zM689 333h2v2h-2zM709 333h2v2h-2zM729 333h2v2h-2zM750 333h2v2h-2zM770 333h2v2h-2zM791 333h2v2h-2zM811 333h2v2h-2zM832 333h2v2h-2zM852 333h2v2h-2zM872 333h2v2h-2zM893 333h2v2h-2zM913 333h2v2h-2zM934 333h2v2h-2zM954 333h2v2h-2zM974 333h2v2h-2zM995 333h2v2h-2zM1015 333h2v2h-2zM1036 333h2v2h-2zM1056 333h2v2h-2zM1077 333h2v2h-2zM1097 333h2v2h-2zM1117 333h2v2h-2zM1138 333h2v2h-2zM1158 333h2v2h-2zM1179 333h2v2h-2zM1199 333h2v2h-2zM1220 333h2v2h-2zM1240 333h2v2h-2zM1260 333h2v2h-2zM1281 333h2v2h-2zM1301 333h2v2h-2zM1322 333h2v2h-2zM1342 333h2v2h-2zM1363 333h2v2h-2zM1383 333h2v2h-2zM1403 333h2v2h-2zM1424 333h2v2h-2zM1444 333h2v2h-2zM1465 333h2v2h-2zM1485 333h2v2h-2zM1506 333h2v2h-2zM1526 333h2v2h-2zM1546 333h2v2h-2zM1567 333h2v2h-2zM1587 333h2v2h-2zM1608 333h2v2h-2zM1628 333h2v2h-2zM1648 333h2v2h-2zM1669 333h2v2h-2zM1689 333h2v2h-2zM1710 333h2v2h-2zM1730 333h2v2h-2zM1751 333h2v2h-2zM1771 333h2v2h-2zM1791 333h2v2h-2zM1812 333h2v2h-2zM1832 333h2v2h-2zM1853 333h2v2h-2zM1873 333h2v2h-2zM1894 333h2v2h-2zM35 354h2v2h-2zM55 354h2v2h-2zM76 354h2v2h-2zM96 354h2v2h-2zM137 354h2v2h-2zM157 354h2v2h-2zM178 354h2v2h-2zM198 354h2v2h-2zM239 354h2v2h-2zM260 354h2v2h-2zM280 354h2v2h-2zM300 354h2v2h-2zM341 354h2v2h-2zM362 354h2v2h-2zM382 354h2v2h-2zM403 354h2v2h-2zM443 354h2v2h-2zM464 354h2v2h-2zM484 354h2v2h-2zM505 354h2v2h-2zM546 354h2v2h-2zM566 354h2v2h-2zM586 354h2v2h-2zM607 354h2v2h-2zM648 354h2v2h-2zM668 354h2v2h-2zM689 354h2v2h-2zM709 354h2v2h-2zM750 354h2v2h-2zM770 354h2v2h-2zM791 354h2v2h-2zM811 354h2v2h-2zM852 354h2v2h-2zM872 354h2v2h-2zM893 354h2v2h-2zM913 354h2v2h-2zM954 354h2v2h-2zM974 354h2v2h-2zM995 354h2v2h-2zM1015 354h2v2h-2zM1056 354h2v2h-2zM1077 354h2v2h-2zM1097 354h2v2h-2zM1117 354h2v2h-2zM1158 354h2v2h-2zM1179 354h2v2h-2zM1199 354h2v2h-2zM1220 354h2v2h-2zM1260 354h2v2h-2zM1281 354h2v2h-2zM1301 354h2v2h-2zM1322 354h2v2h-2zM1363 354h2v2h-2zM1383 354h2v2h-2zM1403 354h2v2h-2zM1424 354h2v2h-2zM1465 354h2v2h-2zM1485 354h2v2h-2zM1506 354h2v2h-2zM1526 354h2v2h-2zM1567 354h2v2h-2zM1587 354h2v2h-2zM1608 354h2v2h-2zM1628 354h2v2h-2zM1669 354h2v2h-2zM1689 354h2v2h-2zM1710 354h2v2h-2zM1730 354h2v2h-2zM1771 354h2v2h-2zM1791 354h2v2h-2zM1812 354h2v2h-2zM1832 354h2v2h-2zM1873 354h2v2h-2zM1894 354h2v2h-2zM14 374h2v2h-2zM35 374h2v2h-2zM55 374h2v2h-2zM76 374h2v2h-2zM96 374h2v2h-2zM117 374h2v2h-2zM137 374h2v2h-2zM157 374h2v2h-2zM178 374h2v2h-2zM198 374h2v2h-2zM219 374h2v2h-2zM239 374h2v2h-2zM260 374h2v2h-2zM280 374h2v2h-2zM300 374h2v2h-2zM321 374h2v2h-2zM341 374h2v2h-2zM362 374h2v2h-2zM382 374h2v2h-2zM403 374h2v2h-2zM423 374h2v2h-2zM443 374h2v2h-2zM464 374h2v2h-2zM484 374h2v2h-2zM505 374h2v2h-2zM525 374h2v2h-2zM546 374h2v2h-2zM566 374h2v2h-2zM586 374h2v2h-2zM607 374h2v2h-2zM627 374h2v2h-2zM648 374h2v2h-2zM668 374h2v2h-2zM689 374h2v2h-2zM709 374h2v2h-2zM729 374h2v2h-2zM750 374h2v2h-2zM770 374h2v2h-2zM791 374h2v2h-2zM811 374h2v2h-2zM832 374h2v2h-2zM852 374h2v2h-2zM872 374h2v2h-2zM893 374h2v2h-2zM913 374h2v2h-2zM934 374h2v2h-2zM954 374h2v2h-2zM974 374h2v2h-2zM995 374h2v2h-2zM1015 374h2v2h-2zM1036 374h2v2h-2zM1056 374h2v2h-2zM1077 374h2v2h-2zM1097 374h2v2h-2zM1117 374h2v2h-2zM1138 374h2v2h-2zM1158 374h2v2h-2zM1179 374h2v2h-2zM1199 374h2v2h-2zM1220 374h2v2h-2zM1240 374h2v2h-2zM1260 374h2v2h-2zM1281 374h2v2h-2zM1301 374h2v2h-2zM1322 374h2v2h-2zM1342 374h2v2h-2zM1363 374h2v2h-2zM1383 374h2v2h-2zM1403 374h2v2h-2zM1424 374h2v2h-2zM1444 374h2v2h-2zM1465 374h2v2h-2zM1485 374h2v2h-2zM1506 374h2v2h-2zM1526 374h2v2h-2zM1546 374h2v2h-2zM1567 374h2v2h-2zM1587 374h2v2h-2zM1608 374h2v2h-2zM1628 374h2v2h-2zM1648 374h2v2h-2zM1669 374h2v2h-2zM1689 374h2v2h-2zM1710 374h2v2h-2zM1730 374h2v2h-2zM1751 374h2v2h-2zM1771 374h2v2h-2zM1791 374h2v2h-2zM1812 374h2v2h-2zM1832 374h2v2h-2zM1853 374h2v2h-2zM1873 374h2v2h-2zM1894 374h2v2h-2zM14 395h2v2h-2zM35 395h2v2h-2zM55 395h2v2h-2zM76 395h2v2h-2zM96 395h2v2h-2zM117 395h2v2h-2zM137 395h2v2h-2zM157 395h2v2h-2zM178 395h2v2h-2zM198 395h2v2h-2zM219 395h2v2h-2zM239 395h2v2h-2zM260 395h2v2h-2zM280 395h2v2h-2zM300 395h2v2h-2zM321 395h2v2h-2zM341 395h2v2h-2zM362 395h2v2h-2zM382 395h2v2h-2zM403 395h2v2h-2zM423 395h2v2h-2zM443 395h2v2h-2zM464 395h2v2h-2zM484 395h2v2h-2zM505 395h2v2h-2zM525 395h2v2h-2zM546 395h2v2h-2zM566 395h2v2h-2zM586 395h2v2h-2zM607 395h2v2h-2zM627 395h2v2h-2zM648 395h2v2h-2zM668 395h2v2h-2zM689 395h2v2h-2zM709 395h2v2h-2zM729 395h2v2h-2zM750 395h2v2h-2zM770 395h2v2h-2zM791 395h2v2h-2zM811 395h2v2h-2zM832 395h2v2h-2zM852 395h2v2h-2zM872 395h2v2h-2zM893 395h2v2h-2zM913 395h2v2h-2zM934 395h2v2h-2zM954 395h2v2h-2zM974 395h2v2h-2zM995 395h2v2h-2zM1015 395h2v2h-2zM1036 395h2v2h-2zM1056 395h2v2h-2zM1077 395h2v2h-2zM1097 395h2v2h-2zM1117 395h2v2h-2zM1138 395h2v2h-2zM1158 395h2v2h-2zM1179 395h2v2h-2zM1199 395h2v2h-2zM1220 395h2v2h-2zM1240 395h2v2h-2zM1260 395h2v2h-2zM1281 395h2v2h-2zM1301 395h2v2h-2zM1322 395h2v2h-2zM1342 395h2v2h-2zM1363 395h2v2h-2zM1383 395h2v2h-2zM1403 395h2v2h-2zM1424 395h2v2h-2zM1444 395h2v2h-2zM1465 395h2v2h-2zM1485 395h2v2h-2zM1506 395h2v2h-2zM1526 395h2v2h-2zM1546 395h2v2h-2zM1567 395h2v2h-2zM1587 395h2v2h-2zM1608 395h2v2h-2zM1628 395h2v2h-2zM1648 395h2v2h-2zM1669 395h2v2h-2zM1689 395h2v2h-2zM1710 395h2v2h-2zM1730 395h2v2h-2zM1751 395h2v2h-2zM1771 395h2v2h-2zM1791 395h2v2h-2zM1812 395h2v2h-2zM1832 395h2v2h-2zM1853 395h2v2h-2zM1873 395h2v2h-2zM1894 395h2v2h-2zM14 415h2v2h-2zM35 415h2v2h-2zM55 415h2v2h-2zM76 415h2v2h-2zM96 415h2v2h-2zM117 415h2v2h-2zM137 415h2v2h-2zM157 415h2v2h-2zM178 415h2v2h-2zM198 415h2v2h-2zM219 415h2v2h-2zM239 415h2v2h-2zM260 415h2v2h-2zM280 415h2v2h-2zM300 415h2v2h-2zM321 415h2v2h-2zM341 415h2v2h-2zM362 415h2v2h-2zM382 415h2v2h-2zM403 415h2v2h-2zM423 415h2v2h-2zM443 415h2v2h-2zM464 415h2v2h-2zM484 415h2v2h-2zM505 415h2v2h-2zM525 415h2v2h-2zM546 415h2v2h-2zM566 415h2v2h-2zM586 415h2v2h-2zM607 415h2v2h-2zM627 415h2v2h-2zM648 415h2v2h-2zM668 415h2v2h-2zM689 415h2v2h-2zM709 415h2v2h-2zM729 415h2v2h-2zM750 415h2v2h-2zM770 415h2v2h-2zM791 415h2v2h-2zM811 415h2v2h-2zM832 415h2v2h-2zM852 415h2v2h-2zM872 415h2v2h-2zM893 415h2v2h-2zM913 415h2v2h-2zM934 415h2v2h-2zM954 415h2v2h-2zM974 415h2v2h-2zM995 415h2v2h-2zM1015 415h2v2h-2zM1036 415h2v2h-2zM1056 415h2v2h-2zM1077 415h2v2h-2zM1097 415h2v2h-2zM1117 415h2v2h-2zM1138 415h2v2h-2zM1158 415h2v2h-2zM1179 415h2v2h-2zM1199 415h2v2h-2zM1220 415h2v2h-2zM1240 415h2v2h-2zM1260 415h2v2h-2zM1281 415h2v2h-2zM1301 415h2v2h-2zM1322 415h2v2h-2zM1342 415h2v2h-2zM1363 415h2v2h-2zM1383 415h2v2h-2zM1403 415h2v2h-2zM1424 415h2v2h-2zM1444 415h2v2h-2zM1465 415h2v2h-2zM1485 415h2v2h-2zM1506 415h2v2h-2zM1526 415h2v2h-2zM1546 415h2v2h-2zM1567 415h2v2h-2zM1587 415h2v2h-2zM1608 415h2v2h-2zM1628 415h2v2h-2zM1648 415h2v2h-2zM1669 415h2v2h-2zM1689 415h2v2h-2zM1710 415h2v2h-2zM1730 415h2v2h-2zM1751 415h2v2h-2zM1771 415h2v2h-2zM1791 415h2v2h-2zM1812 415h2v2h-2zM1832 415h2v2h-2zM1853 415h2v2h-2zM1873 415h2v2h-2zM1894 415h2v2h-2zM14 435h2v2h-2zM35 435h2v2h-2zM55 435h2v2h-2zM76 435h2v2h-2zM96 435h2v2h-2zM117 435h2v2h-2zM137 435h2v2h-2zM157 435h2v2h-2zM178 435h2v2h-2zM198 435h2v2h-2zM219 435h2v2h-2zM239 435h2v2h-2zM260 435h2v2h-2zM280 435h2v2h-2zM300 435h2v2h-2zM321 435h2v2h-2zM341 435h2v2h-2zM362 435h2v2h-2zM382 435h2v2h-2zM403 435h2v2h-2zM423 435h2v2h-2zM443 435h2v2h-2zM464 435h2v2h-2zM484 435h2v2h-2zM505 435h2v2h-2zM525 435h2v2h-2zM546 435h2v2h-2zM566 435h2v2h-2zM586 435h2v2h-2zM607 435h2v2h-2zM627 435h2v2h-2zM648 435h2v2h-2zM668 435h2v2h-2zM689 435h2v2h-2zM709 435h2v2h-2zM729 435h2v2h-2zM750 435h2v2h-2zM770 435h2v2h-2zM791 435h2v2h-2zM811 435h2v2h-2zM832 435h2v2h-2zM852 435h2v2h-2zM872 435h2v2h-2zM893 435h2v2h-2zM913 435h2v2h-2zM934 435h2v2h-2zM954 435h2v2h-2zM974 435h2v2h-2zM995 435h2v2h-2zM1015 435h2v2h-2zM1036 435h2v2h-2zM1056 435h2v2h-2zM1077 435h2v2h-2zM1097 435h2v2h-2zM1117 435h2v2h-2zM1138 435h2v2h-2zM1158 435h2v2h-2zM1179 435h2v2h-2zM1199 435h2v2h-2zM1220 435h2v2h-2zM1240 435h2v2h-2zM1260 435h2v2h-2zM1281 435h2v2h-2zM1301 435h2v2h-2zM1322 435h2v2h-2zM1342 435h2v2h-2zM1363 435h2v2h-2zM1383 435h2v2h-2zM1403 435h2v2h-2zM1424 435h2v2h-2zM1444 435h2v2h-2zM1465 435h2v2h-2zM1485 435h2v2h-2zM1506 435h2v2h-2zM1526 435h2v2h-2zM1546 435h2v2h-2zM1567 435h2v2h-2zM1587 435h2v2h-2zM1608 435h2v2h-2zM1628 435h2v2h-2zM1648 435h2v2h-2zM1669 435h2v2h-2zM1689 435h2v2h-2zM1710 435h2v2h-2zM1730 435h2v2h-2zM1751 435h2v2h-2zM1771 435h2v2h-2zM1791 435h2v2h-2zM1812 435h2v2h-2zM1832 435h2v2h-2zM1853 435h2v2h-2zM1873 435h2v2h-2zM1894 435h2v2h-2zM35 456h2v2h-2zM55 456h2v2h-2zM76 456h2v2h-2zM96 456h2v2h-2zM137 456h2v2h-2zM157 456h2v2h-2zM178 456h2v2h-2zM198 456h2v2h-2zM239 456h2v2h-2zM260 456h2v2h-2zM280 456h2v2h-2zM300 456h2v2h-2zM341 456h2v2h-2zM362 456h2v2h-2zM382 456h2v2h-2zM403 456h2v2h-2zM443 456h2v2h-2zM464 456h2v2h-2zM484 456h2v2h-2zM505 456h2v2h-2zM546 456h2v2h-2zM566 456h2v2h-2zM586 456h2v2h-2zM607 456h2v2h-2zM648 456h2v2h-2zM668 456h2v2h-2zM689 456h2v2h-2zM709 456h2v2h-2zM750 456h2v2h-2zM770 456h2v2h-2zM791 456h2v2h-2zM811 456h2v2h-2zM852 456h2v2h-2zM872 456h2v2h-2zM893 456h2v2h-2zM913 456h2v2h-2zM954 456h2v2h-2zM974 456h2v2h-2zM995 456h2v2h-2zM1015 456h2v2h-2zM1056 456h2v2h-2zM1077 456h2v2h-2zM1097 456h2v2h-2zM1117 456h2v2h-2zM1158 456h2v2h-2zM1179 456h2v2h-2zM1199 456h2v2h-2zM1220 456h2v2h-2zM1260 456h2v2h-2zM1281 456h2v2h-2zM1301 456h2v2h-2zM1322 456h2v2h-2zM1363 456h2v2h-2zM1383 456h2v2h-2zM1403 456h2v2h-2zM1424 456h2v2h-2zM1465 456h2v2h-2zM1485 456h2v2h-2zM1506 456h2v2h-2zM1526 456h2v2h-2zM1567 456h2v2h-2zM1587 456h2v2h-2zM1608 456h2v2h-2zM1628 456h2v2h-2zM1669 456h2v2h-2zM1689 456h2v2h-2zM1710 456h2v2h-2zM1730 456h2v2h-2zM1771 456h2v2h-2zM1791 456h2v2h-2zM1812 456h2v2h-2zM1832 456h2v2h-2zM1873 456h2v2h-2zM1894 456h2v2h-2zM14 476h2v2h-2zM35 476h2v2h-2zM55 476h2v2h-2zM76 476h2v2h-2zM96 476h2v2h-2zM117 476h2v2h-2zM137 476h2v2h-2zM157 476h2v2h-2zM178 476h2v2h-2zM198 476h2v2h-2zM219 476h2v2h-2zM239 476h2v2h-2zM260 476h2v2h-2zM280 476h2v2h-2zM300 476h2v2h-2zM321 476h2v2h-2zM341 476h2v2h-2zM362 476h2v2h-2zM382 476h2v2h-2zM403 476h2v2h-2zM423 476h2v2h-2zM443 476h2v2h-2zM464 476h2v2h-2zM484 476h2v2h-2zM505 476h2v2h-2zM525 476h2v2h-2zM546 476h2v2h-2zM566 476h2v2h-2zM586 476h2v2h-2zM607 476h2v2h-2zM627 476h2v2h-2zM648 476h2v2h-2zM668 476h2v2h-2zM689 476h2v2h-2zM709 476h2v2h-2zM729 476h2v2h-2zM750 476h2v2h-2zM770 476h2v2h-2zM791 476h2v2h-2zM811 476h2v2h-2zM832 476h2v2h-2zM852 476h2v2h-2zM872 476h2v2h-2zM893 476h2v2h-2zM913 476h2v2h-2zM934 476h2v2h-2zM954 476h2v2h-2zM974 476h2v2h-2zM995 476h2v2h-2zM1015 476h2v2h-2zM1036 476h2v2h-2zM1056 476h2v2h-2zM1077 476h2v2h-2zM1097 476h2v2h-2zM1117 476h2v2h-2zM1138 476h2v2h-2zM1158 476h2v2h-2zM1179 476h2v2h-2zM1199 476h2v2h-2zM1220 476h2v2h-2zM1240 476h2v2h-2zM1260 476h2v2h-2zM1281 476h2v2h-2zM1301 476h2v2h-2zM1322 476h2v2h-2zM1342 476h2v2h-2zM1363 476h2v2h-2zM1383 476h2v2h-2zM1403 476h2v2h-2zM1424 476h2v2h-2zM1444 476h2v2h-2zM1465 476h2v2h-2zM1485 476h2v2h-2zM1506 476h2v2h-2zM1526 476h2v2h-2zM1546 476h2v2h-2zM1567 476h2v2h-2zM1587 476h2v2h-2zM1608 476h2v2h-2zM1628 476h2v2h-2zM1648 476h2v2h-2zM1669 476h2v2h-2zM1689 476h2v2h-2zM1710 476h2v2h-2zM1730 476h2v2h-2zM1751 476h2v2h-2zM1771 476h2v2h-2zM1791 476h2v2h-2zM1812 476h2v2h-2zM1832 476h2v2h-2zM1853 476h2v2h-2zM1873 476h2v2h-2zM1894 476h2v2h-2zM14 497h2v2h-2zM35 497h2v2h-2zM55 497h2v2h-2zM76 497h2v2h-2zM96 497h2v2h-2zM117 497h2v2h-2zM137 497h2v2h-2zM157 497h2v2h-2zM178 497h2v2h-2zM198 497h2v2h-2zM219 497h2v2h-2zM239 497h2v2h-2zM260 497h2v2h-2zM280 497h2v2h-2zM300 497h2v2h-2zM321 497h2v2h-2zM341 497h2v2h-2zM362 497h2v2h-2zM382 497h2v2h-2zM403 497h2v2h-2zM423 497h2v2h-2zM443 497h2v2h-2zM464 497h2v2h-2zM484 497h2v2h-2zM505 497h2v2h-2zM525 497h2v2h-2zM546 497h2v2h-2zM566 497h2v2h-2zM586 497h2v2h-2zM607 497h2v2h-2zM627 497h2v2h-2zM648 497h2v2h-2zM668 497h2v2h-2zM689 497h2v2h-2zM709 497h2v2h-2zM729 497h2v2h-2zM750 497h2v2h-2zM770 497h2v2h-2zM791 497h2v2h-2zM811 497h2v2h-2zM832 497h2v2h-2zM852 497h2v2h-2zM872 497h2v2h-2zM893 497h2v2h-2zM913 497h2v2h-2zM934 497h2v2h-2zM954 497h2v2h-2zM974 497h2v2h-2zM995 497h2v2h-2zM1015 497h2v2h-2zM1036 497h2v2h-2zM1056 497h2v2h-2zM1077 497h2v2h-2zM1097 497h2v2h-2zM1117 497h2v2h-2zM1138 497h2v2h-2zM1158 497h2v2h-2zM1179 497h2v2h-2zM1199 497h2v2h-2zM1220 497h2v2h-2zM1240 497h2v2h-2zM1260 497h2v2h-2zM1281 497h2v2h-2zM1301 497h2v2h-2zM1322 497h2v2h-2zM1342 497h2v2h-2zM1363 497h2v2h-2zM1383 497h2v2h-2zM1403 497h2v2h-2zM1424 497h2v2h-2zM1444 497h2v2h-2zM1465 497h2v2h-2zM1485 497h2v2h-2zM1506 497h2v2h-2zM1526 497h2v2h-2zM1546 497h2v2h-2zM1567 497h2v2h-2zM1587 497h2v2h-2zM1608 497h2v2h-2zM1628 497h2v2h-2zM1648 497h2v2h-2zM1669 497h2v2h-2zM1689 497h2v2h-2zM1710 497h2v2h-2zM1730 497h2v2h-2zM1751 497h2v2h-2zM1771 497h2v2h-2zM1791 497h2v2h-2zM1812 497h2v2h-2zM1832 497h2v2h-2zM1853 497h2v2h-2zM1873 497h2v2h-2zM1894 497h2v2h-2zM14 517h2v2h-2zM35 517h2v2h-2zM55 517h2v2h-2zM76 517h2v2h-2zM96 517h2v2h-2zM117 517h2v2h-2zM137 517h2v2h-2zM157 517h2v2h-2zM178 517h2v2h-2zM198 517h2v2h-2zM219 517h2v2h-2zM239 517h2v2h-2zM260 517h2v2h-2zM280 517h2v2h-2zM300 517h2v2h-2zM321 517h2v2h-2zM341 517h2v2h-2zM362 517h2v2h-2zM382 517h2v2h-2zM403 517h2v2h-2zM423 517h2v2h-2zM443 517h2v2h-2zM464 517h2v2h-2zM484 517h2v2h-2zM505 517h2v2h-2zM525 517h2v2h-2zM546 517h2v2h-2zM566 517h2v2h-2zM586 517h2v2h-2zM607 517h2v2h-2zM627 517h2v2h-2zM648 517h2v2h-2zM668 517h2v2h-2zM689 517h2v2h-2zM709 517h2v2h-2zM729 517h2v2h-2zM750 517h2v2h-2zM770 517h2v2h-2zM791 517h2v2h-2zM811 517h2v2h-2zM832 517h2v2h-2zM852 517h2v2h-2zM872 517h2v2h-2zM893 517h2v2h-2zM913 517h2v2h-2zM934 517h2v2h-2zM954 517h2v2h-2zM974 517h2v2h-2zM995 517h2v2h-2zM1015 517h2v2h-2zM1036 517h2v2h-2zM1056 517h2v2h-2zM1077 517h2v2h-2zM1097 517h2v2h-2zM1117 517h2v2h-2zM1138 517h2v2h-2zM1158 517h2v2h-2zM1179 517h2v2h-2zM1199 517h2v2h-2zM1220 517h2v2h-2zM1240 517h2v2h-2zM1260 517h2v2h-2zM1281 517h2v2h-2zM1301 517h2v2h-2zM1322 517h2v2h-2zM1342 517h2v2h-2zM1363 517h2v2h-2zM1383 517h2v2h-2zM1403 517h2v2h-2zM1424 517h2v2h-2zM1444 517h2v2h-2zM1465 517h2v2h-2zM1485 517h2v2h-2zM1506 517h2v2h-2zM1526 517h2v2h-2zM1546 517h2v2h-2zM1567 517h2v2h-2zM1587 517h2v2h-2zM1608 517h2v2h-2zM1628 517h2v2h-2zM1648 517h2v2h-2zM1669 517h2v2h-2zM1689 517h2v2h-2zM1710 517h2v2h-2zM1730 517h2v2h-2zM1751 517h2v2h-2zM1771 517h2v2h-2zM1791 517h2v2h-2zM1812 517h2v2h-2zM1832 517h2v2h-2zM1853 517h2v2h-2zM1873 517h2v2h-2zM1894 517h2v2h-2zM14 538h2v2h-2zM35 538h2v2h-2zM55 538h2v2h-2zM76 538h2v2h-2zM96 538h2v2h-2zM117 538h2v2h-2zM137 538h2v2h-2zM157 538h2v2h-2zM178 538h2v2h-2zM198 538h2v2h-2zM219 538h2v2h-2zM239 538h2v2h-2zM260 538h2v2h-2zM280 538h2v2h-2zM300 538h2v2h-2zM321 538h2v2h-2zM341 538h2v2h-2zM362 538h2v2h-2zM382 538h2v2h-2zM403 538h2v2h-2zM423 538h2v2h-2zM443 538h2v2h-2zM464 538h2v2h-2zM484 538h2v2h-2zM505 538h2v2h-2zM525 538h2v2h-2zM546 538h2v2h-2zM566 538h2v2h-2zM586 538h2v2h-2zM607 538h2v2h-2zM627 538h2v2h-2zM648 538h2v2h-2zM668 538h2v2h-2zM689 538h2v2h-2zM709 538h2v2h-2zM729 538h2v2h-2zM750 538h2v2h-2zM770 538h2v2h-2zM791 538h2v2h-2zM811 538h2v2h-2zM832 538h2v2h-2zM852 538h2v2h-2zM872 538h2v2h-2zM893 538h2v2h-2zM913 538h2v2h-2zM934 538h2v2h-2zM954 538h2v2h-2zM974 538h2v2h-2zM995 538h2v2h-2zM1015 538h2v2h-2zM1036 538h2v2h-2zM1056 538h2v2h-2zM1077 538h2v2h-2zM1097 538h2v2h-2zM1117 538h2v2h-2zM1138 538h2v2h-2zM1158 538h2v2h-2zM1179 538h2v2h-2zM1199 538h2v2h-2zM1220 538h2v2h-2zM1240 538h2v2h-2zM1260 538h2v2h-2zM1281 538h2v2h-2zM1301 538h2v2h-2zM1322 538h2v2h-2zM1342 538h2v2h-2zM1363 538h2v2h-2zM1383 538h2v2h-2zM1403 538h2v2h-2zM1424 538h2v2h-2zM1444 538h2v2h-2zM1465 538h2v2h-2zM1485 538h2v2h-2zM1506 538h2v2h-2zM1526 538h2v2h-2zM1546 538h2v2h-2zM1567 538h2v2h-2zM1587 538h2v2h-2zM1608 538h2v2h-2zM1628 538h2v2h-2zM1648 538h2v2h-2zM1669 538h2v2h-2zM1689 538h2v2h-2zM1710 538h2v2h-2zM1730 538h2v2h-2zM1751 538h2v2h-2zM1771 538h2v2h-2zM1791 538h2v2h-2zM1812 538h2v2h-2zM1832 538h2v2h-2zM1853 538h2v2h-2zM1873 538h2v2h-2zM1894 538h2v2h-2zM35 558h2v2h-2zM55 558h2v2h-2zM76 558h2v2h-2zM96 558h2v2h-2zM137 558h2v2h-2zM157 558h2v2h-2zM178 558h2v2h-2zM198 558h2v2h-2zM239 558h2v2h-2zM260 558h2v2h-2zM280 558h2v2h-2zM300 558h2v2h-2zM341 558h2v2h-2zM362 558h2v2h-2zM382 558h2v2h-2zM403 558h2v2h-2zM443 558h2v2h-2zM464 558h2v2h-2zM484 558h2v2h-2zM505 558h2v2h-2zM546 558h2v2h-2zM566 558h2v2h-2zM586 558h2v2h-2zM607 558h2v2h-2zM648 558h2v2h-2zM668 558h2v2h-2zM689 558h2v2h-2zM709 558h2v2h-2zM750 558h2v2h-2zM770 558h2v2h-2zM791 558h2v2h-2zM811 558h2v2h-2zM852 558h2v2h-2zM872 558h2v2h-2zM893 558h2v2h-2zM913 558h2v2h-2zM954 558h2v2h-2zM974 558h2v2h-2zM995 558h2v2h-2zM1015 558h2v2h-2zM1056 558h2v2h-2zM1077 558h2v2h-2zM1097 558h2v2h-2zM1117 558h2v2h-2zM1158 558h2v2h-2zM1179 558h2v2h-2zM1199 558h2v2h-2zM1220 558h2v2h-2zM1260 558h2v2h-2zM1281 558h2v2h-2zM1301 558h2v2h-2zM1322 558h2v2h-2zM1363 558h2v2h-2zM1383 558h2v2h-2zM1403 558h2v2h-2zM1424 558h2v2h-2zM1465 558h2v2h-2zM1485 558h2v2h-2zM1506 558h2v2h-2zM1526 558h2v2h-2zM1567 558h2v2h-2zM1587 558h2v2h-2zM1608 558h2v2h-2zM1628 558h2v2h-2zM1669 558h2v2h-2zM1689 558h2v2h-2zM1710 558h2v2h-2zM1730 558h2v2h-2zM1771 558h2v2h-2zM1791 558h2v2h-2zM1812 558h2v2h-2zM1832 558h2v2h-2zM1873 558h2v2h-2zM1894 558h2v2h-2zM14 578h2v2h-2zM35 578h2v2h-2zM55 578h2v2h-2zM76 578h2v2h-2zM96 578h2v2h-2zM117 578h2v2h-2zM137 578h2v2h-2zM157 578h2v2h-2zM178 578h2v2h-2zM198 578h2v2h-2zM219 578h2v2h-2zM239 578h2v2h-2zM260 578h2v2h-2zM280 578h2v2h-2zM300 578h2v2h-2zM321 578h2v2h-2zM341 578h2v2h-2zM362 578h2v2h-2zM382 578h2v2h-2zM403 578h2v2h-2zM423 578h2v2h-2zM443 578h2v2h-2zM464 578h2v2h-2zM484 578h2v2h-2zM505 578h2v2h-2zM525 578h2v2h-2zM546 578h2v2h-2zM566 578h2v2h-2zM586 578h2v2h-2zM607 578h2v2h-2zM627 578h2v2h-2zM648 578h2v2h-2zM668 578h2v2h-2zM689 578h2v2h-2zM709 578h2v2h-2zM729 578h2v2h-2zM750 578h2v2h-2zM770 578h2v2h-2zM791 578h2v2h-2zM811 578h2v2h-2zM832 578h2v2h-2zM852 578h2v2h-2zM872 578h2v2h-2zM893 578h2v2h-2zM913 578h2v2h-2zM934 578h2v2h-2zM954 578h2v2h-2zM974 578h2v2h-2zM995 578h2v2h-2zM1015 578h2v2h-2zM1036 578h2v2h-2zM1056 578h2v2h-2zM1077 578h2v2h-2zM1097 578h2v2h-2zM1117 578h2v2h-2zM1138 578h2v2h-2zM1158 578h2v2h-2zM1179 578h2v2h-2zM1199 578h2v2h-2zM1220 578h2v2h-2zM1240 578h2v2h-2zM1260 578h2v2h-2zM1281 578h2v2h-2zM1301 578h2v2h-2zM1322 578h2v2h-2zM1342 578h2v2h-2zM1363 578h2v2h-2zM1383 578h2v2h-2zM1403 578h2v2h-2zM1424 578h2v2h-2zM1444 578h2v2h-2zM1465 578h2v2h-2zM1485 578h2v2h-2zM1506 578h2v2h-2zM1526 578h2v2h-2zM1546 578h2v2h-2zM1567 578h2v2h-2zM1587 578h2v2h-2zM1608 578h2v2h-2zM1628 578h2v2h-2zM1648 578h2v2h-2zM1669 578h2v2h-2zM1689 578h2v2h-2zM1710 578h2v2h-2zM1730 578h2v2h-2zM1751 578h2v2h-2zM1771 578h2v2h-2zM1791 578h2v2h-2zM1812 578h2v2h-2zM1832 578h2v2h-2zM1853 578h2v2h-2zM1873 578h2v2h-2zM1894 578h2v2h-2zM14 599h2v2h-2zM35 599h2v2h-2zM55 599h2v2h-2zM76 599h2v2h-2zM96 599h2v2h-2zM117 599h2v2h-2zM137 599h2v2h-2zM157 599h2v2h-2zM178 599h2v2h-2zM198 599h2v2h-2zM219 599h2v2h-2zM239 599h2v2h-2zM260 599h2v2h-2zM280 599h2v2h-2zM300 599h2v2h-2zM321 599h2v2h-2zM341 599h2v2h-2zM362 599h2v2h-2zM382 599h2v2h-2zM403 599h2v2h-2zM423 599h2v2h-2zM443 599h2v2h-2zM464 599h2v2h-2zM484 599h2v2h-2zM505 599h2v2h-2zM525 599h2v2h-2zM546 599h2v2h-2zM566 599h2v2h-2zM586 599h2v2h-2zM607 599h2v2h-2zM627 599h2v2h-2zM648 599h2v2h-2zM668 599h2v2h-2zM689 599h2v2h-2zM709 599h2v2h-2zM729 599h2v2h-2zM750 599h2v2h-2zM770 599h2v2h-2zM791 599h2v2h-2zM811 599h2v2h-2zM832 599h2v2h-2zM852 599h2v2h-2zM872 599h2v2h-2zM893 599h2v2h-2zM913 599h2v2h-2zM934 599h2v2h-2zM954 599h2v2h-2zM974 599h2v2h-2zM995 599h2v2h-2zM1015 599h2v2h-2zM1036 599h2v2h-2zM1056 599h2v2h-2zM1077 599h2v2h-2zM1097 599h2v2h-2zM1117 599h2v2h-2zM1138 599h2v2h-2zM1158 599h2v2h-2zM1179 599h2v2h-2zM1199 599h2v2h-2zM1220 599h2v2h-2zM1240 599h2v2h-2zM1260 599h2v2h-2zM1281 599h2v2h-2zM1301 599h2v2h-2zM1322 599h2v2h-2zM1342 599h2v2h-2zM1363 599h2v2h-2zM1383 599h2v2h-2zM1403 599h2v2h-2zM1424 599h2v2h-2zM1444 599h2v2h-2zM1465 599h2v2h-2zM1485 599h2v2h-2zM1506 599h2v2h-2zM1526 599h2v2h-2zM1546 599h2v2h-2zM1567 599h2v2h-2zM1587 599h2v2h-2zM1608 599h2v2h-2zM1628 599h2v2h-2zM1648 599h2v2h-2zM1669 599h2v2h-2zM1689 599h2v2h-2zM1710 599h2v2h-2zM1730 599h2v2h-2zM1751 599h2v2h-2zM1771 599h2v2h-2zM1791 599h2v2h-2zM1812 599h2v2h-2zM1832 599h2v2h-2zM1853 599h2v2h-2zM1873 599h2v2h-2zM1894 599h2v2h-2zM14 619h2v2h-2zM35 619h2v2h-2zM55 619h2v2h-2zM76 619h2v2h-2zM96 619h2v2h-2zM117 619h2v2h-2zM137 619h2v2h-2zM157 619h2v2h-2zM178 619h2v2h-2zM198 619h2v2h-2zM219 619h2v2h-2zM239 619h2v2h-2zM260 619h2v2h-2zM280 619h2v2h-2zM300 619h2v2h-2zM321 619h2v2h-2zM341 619h2v2h-2zM362 619h2v2h-2zM382 619h2v2h-2zM403 619h2v2h-2zM423 619h2v2h-2zM443 619h2v2h-2zM464 619h2v2h-2zM484 619h2v2h-2zM505 619h2v2h-2zM525 619h2v2h-2zM546 619h2v2h-2zM566 619h2v2h-2zM586 619h2v2h-2zM607 619h2v2h-2zM627 619h2v2h-2zM648 619h2v2h-2zM668 619h2v2h-2zM689 619h2v2h-2zM709 619h2v2h-2zM729 619h2v2h-2zM750 619h2v2h-2zM770 619h2v2h-2zM791 619h2v2h-2zM811 619h2v2h-2zM832 619h2v2h-2zM852 619h2v2h-2zM872 619h2v2h-2zM893 619h2v2h-2zM913 619h2v2h-2zM934 619h2v2h-2zM954 619h2v2h-2zM974 619h2v2h-2zM995 619h2v2h-2zM1015 619h2v2h-2zM1036 619h2v2h-2zM1056 619h2v2h-2zM1077 619h2v2h-2zM1097 619h2v2h-2zM1117 619h2v2h-2zM1138 619h2v2h-2zM1158 619h2v2h-2zM1179 619h2v2h-2zM1199 619h2v2h-2zM1220 619h2v2h-2zM1240 619h2v2h-2zM1260 619h2v2h-2zM1281 619h2v2h-2zM1301 619h2v2h-2zM1322 619h2v2h-2zM1342 619h2v2h-2zM1363 619h2v2h-2zM1383 619h2v2h-2zM1403 619h2v2h-2zM1424 619h2v2h-2zM1444 619h2v2h-2zM1465 619h2v2h-2zM1485 619h2v2h-2zM1506 619h2v2h-2zM1526 619h2v2h-2zM1546 619h2v2h-2zM1567 619h2v2h-2zM1587 619h2v2h-2zM1608 619h2v2h-2zM1628 619h2v2h-2zM1648 619h2v2h-2zM1669 619h2v2h-2zM1689 619h2v2h-2zM1710 619h2v2h-2zM1730 619h2v2h-2zM1751 619h2v2h-2zM1771 619h2v2h-2zM1791 619h2v2h-2zM1812 619h2v2h-2zM1832 619h2v2h-2zM1853 619h2v2h-2zM1873 619h2v2h-2zM1894 619h2v2h-2zM14 640h2v2h-2zM35 640h2v2h-2zM55 640h2v2h-2zM76 640h2v2h-2zM96 640h2v2h-2zM117 640h2v2h-2zM137 640h2v2h-2zM157 640h2v2h-2zM178 640h2v2h-2zM198 640h2v2h-2zM219 640h2v2h-2zM239 640h2v2h-2zM260 640h2v2h-2zM280 640h2v2h-2zM300 640h2v2h-2zM321 640h2v2h-2zM341 640h2v2h-2zM362 640h2v2h-2zM382 640h2v2h-2zM403 640h2v2h-2zM423 640h2v2h-2zM443 640h2v2h-2zM464 640h2v2h-2zM484 640h2v2h-2zM505 640h2v2h-2zM525 640h2v2h-2zM546 640h2v2h-2zM566 640h2v2h-2zM586 640h2v2h-2zM607 640h2v2h-2zM627 640h2v2h-2zM648 640h2v2h-2zM668 640h2v2h-2zM689 640h2v2h-2zM709 640h2v2h-2zM729 640h2v2h-2zM750 640h2v2h-2zM770 640h2v2h-2zM791 640h2v2h-2zM811 640h2v2h-2zM832 640h2v2h-2zM852 640h2v2h-2zM872 640h2v2h-2zM893 640h2v2h-2zM913 640h2v2h-2zM934 640h2v2h-2zM954 640h2v2h-2zM974 640h2v2h-2zM995 640h2v2h-2zM1015 640h2v2h-2zM1036 640h2v2h-2zM1056 640h2v2h-2zM1077 640h2v2h-2zM1097 640h2v2h-2zM1117 640h2v2h-2zM1138 640h2v2h-2zM1158 640h2v2h-2zM1179 640h2v2h-2zM1199 640h2v2h-2zM1220 640h2v2h-2zM1240 640h2v2h-2zM1260 640h2v2h-2zM1281 640h2v2h-2zM1301 640h2v2h-2zM1322 640h2v2h-2zM1342 640h2v2h-2zM1363 640h2v2h-2zM1383 640h2v2h-2zM1403 640h2v2h-2zM1424 640h2v2h-2zM1444 640h2v2h-2zM1465 640h2v2h-2zM1485 640h2v2h-2zM1506 640h2v2h-2zM1526 640h2v2h-2zM1546 640h2v2h-2zM1567 640h2v2h-2zM1587 640h2v2h-2zM1608 640h2v2h-2zM1628 640h2v2h-2zM1648 640h2v2h-2zM1669 640h2v2h-2zM1689 640h2v2h-2zM1710 640h2v2h-2zM1730 640h2v2h-2zM1751 640h2v2h-2zM1771 640h2v2h-2zM1791 640h2v2h-2zM1812 640h2v2h-2zM1832 640h2v2h-2zM1853 640h2v2h-2zM1873 640h2v2h-2zM1894 640h2v2h-2zM35 660h2v2h-2zM55 660h2v2h-2zM76 660h2v2h-2zM96 660h2v2h-2zM137 660h2v2h-2zM157 660h2v2h-2zM178 660h2v2h-2zM198 660h2v2h-2zM239 660h2v2h-2zM260 660h2v2h-2zM280 660h2v2h-2zM300 660h2v2h-2zM341 660h2v2h-2zM362 660h2v2h-2zM382 660h2v2h-2zM403 660h2v2h-2zM443 660h2v2h-2zM464 660h2v2h-2zM484 660h2v2h-2zM505 660h2v2h-2zM546 660h2v2h-2zM566 660h2v2h-2zM586 660h2v2h-2zM607 660h2v2h-2zM648 660h2v2h-2zM668 660h2v2h-2zM689 660h2v2h-2zM709 660h2v2h-2zM750 660h2v2h-2zM770 660h2v2h-2zM791 660h2v2h-2zM811 660h2v2h-2zM852 660h2v2h-2zM872 660h2v2h-2zM893 660h2v2h-2zM913 660h2v2h-2zM954 660h2v2h-2zM974 660h2v2h-2zM995 660h2v2h-2zM1015 660h2v2h-2zM1056 660h2v2h-2zM1077 660h2v2h-2zM1097 660h2v2h-2zM1117 660h2v2h-2zM1158 660h2v2h-2zM1179 660h2v2h-2zM1199 660h2v2h-2zM1220 660h2v2h-2zM1260 660h2v2h-2zM1281 660h2v2h-2zM1301 660h2v2h-2zM1322 660h2v2h-2zM1363 660h2v2h-2zM1383 660h2v2h-2zM1403 660h2v2h-2zM1424 660h2v2h-2zM1465 660h2v2h-2zM1485 660h2v2h-2zM1506 660h2v2h-2zM1526 660h2v2h-2zM1567 660h2v2h-2zM1587 660h2v2h-2zM1608 660h2v2h-2zM1628 660h2v2h-2zM1669 660h2v2h-2zM1689 660h2v2h-2zM1710 660h2v2h-2zM1730 660h2v2h-2zM1771 660h2v2h-2zM1791 660h2v2h-2zM1812 660h2v2h-2zM1832 660h2v2h-2zM1873 660h2v2h-2zM1894 660h2v2h-2zM14 681h2v2h-2zM35 681h2v2h-2zM55 681h2v2h-2zM76 681h2v2h-2zM96 681h2v2h-2zM117 681h2v2h-2zM137 681h2v2h-2zM157 681h2v2h-2zM178 681h2v2h-2zM198 681h2v2h-2zM219 681h2v2h-2zM239 681h2v2h-2zM260 681h2v2h-2zM280 681h2v2h-2zM300 681h2v2h-2zM321 681h2v2h-2zM341 681h2v2h-2zM362 681h2v2h-2zM382 681h2v2h-2zM403 681h2v2h-2zM423 681h2v2h-2zM443 681h2v2h-2zM464 681h2v2h-2zM484 681h2v2h-2zM505 681h2v2h-2zM525 681h2v2h-2zM546 681h2v2h-2zM566 681h2v2h-2zM586 681h2v2h-2zM607 681h2v2h-2zM627 681h2v2h-2zM648 681h2v2h-2zM668 681h2v2h-2zM689 681h2v2h-2zM709 681h2v2h-2zM729 681h2v2h-2zM750 681h2v2h-2zM770 681h2v2h-2zM791 681h2v2h-2zM811 681h2v2h-2zM832 681h2v2h-2zM852 681h2v2h-2zM872 681h2v2h-2zM893 681h2v2h-2zM913 681h2v2h-2zM934 681h2v2h-2zM954 681h2v2h-2zM974 681h2v2h-2zM995 681h2v2h-2zM1015 681h2v2h-2zM1036 681h2v2h-2zM1056 681h2v2h-2zM1077 681h2v2h-2zM1097 681h2v2h-2zM1117 681h2v2h-2zM1138 681h2v2h-2zM1158 681h2v2h-2zM1179 681h2v2h-2zM1199 681h2v2h-2zM1220 681h2v2h-2zM1240 681h2v2h-2zM1260 681h2v2h-2zM1281 681h2v2h-2zM1301 681h2v2h-2zM1322 681h2v2h-2zM1342 681h2v2h-2zM1363 681h2v2h-2zM1383 681h2v2h-2zM1403 681h2v2h-2zM1424 681h2v2h-2zM1444 681h2v2h-2zM1465 681h2v2h-2zM1485 681h2v2h-2zM1506 681h2v2h-2zM1526 681h2v2h-2zM1546 681h2v2h-2zM1567 681h2v2h-2zM1587 681h2v2h-2zM1608 681h2v2h-2zM1628 681h2v2h-2zM1648 681h2v2h-2zM1669 681h2v2h-2zM1689 681h2v2h-2zM1710 681h2v2h-2zM1730 681h2v2h-2zM1751 681h2v2h-2zM1771 681h2v2h-2zM1791 681h2v2h-2zM1812 681h2v2h-2zM1832 681h2v2h-2zM1853 681h2v2h-2zM1873 681h2v2h-2zM1894 681h2v2h-2zM14 701h2v2h-2zM35 701h2v2h-2zM55 701h2v2h-2zM76 701h2v2h-2zM96 701h2v2h-2zM117 701h2v2h-2zM137 701h2v2h-2zM157 701h2v2h-2zM178 701h2v2h-2zM198 701h2v2h-2zM219 701h2v2h-2zM239 701h2v2h-2zM260 701h2v2h-2zM280 701h2v2h-2zM300 701h2v2h-2zM321 701h2v2h-2zM341 701h2v2h-2zM362 701h2v2h-2zM382 701h2v2h-2zM403 701h2v2h-2zM423 701h2v2h-2zM443 701h2v2h-2zM464 701h2v2h-2zM484 701h2v2h-2zM505 701h2v2h-2zM525 701h2v2h-2zM546 701h2v2h-2zM566 701h2v2h-2zM586 701h2v2h-2zM607 701h2v2h-2zM627 701h2v2h-2zM648 701h2v2h-2zM668 701h2v2h-2zM689 701h2v2h-2zM709 701h2v2h-2zM729 701h2v2h-2zM750 701h2v2h-2zM770 701h2v2h-2zM791 701h2v2h-2zM811 701h2v2h-2zM832 701h2v2h-2zM852 701h2v2h-2zM872 701h2v2h-2zM893 701h2v2h-2zM913 701h2v2h-2zM934 701h2v2h-2zM954 701h2v2h-2zM974 701h2v2h-2zM995 701h2v2h-2zM1015 701h2v2h-2zM1036 701h2v2h-2zM1056 701h2v2h-2zM1077 701h2v2h-2zM1097 701h2v2h-2zM1117 701h2v2h-2zM1138 701h2v2h-2zM1158 701h2v2h-2zM1179 701h2v2h-2zM1199 701h2v2h-2zM1220 701h2v2h-2zM1240 701h2v2h-2zM1260 701h2v2h-2zM1281 701h2v2h-2zM1301 701h2v2h-2zM1322 701h2v2h-2zM1342 701h2v2h-2zM1363 701h2v2h-2zM1383 701h2v2h-2zM1403 701h2v2h-2zM1424 701h2v2h-2zM1444 701h2v2h-2zM1465 701h2v2h-2zM1485 701h2v2h-2zM1506 701h2v2h-2zM1526 701h2v2h-2zM1546 701h2v2h-2zM1567 701h2v2h-2zM1587 701h2v2h-2zM1608 701h2v2h-2zM1628 701h2v2h-2zM1648 701h2v2h-2zM1669 701h2v2h-2zM1689 701h2v2h-2zM1710 701h2v2h-2zM1730 701h2v2h-2zM1751 701h2v2h-2zM1771 701h2v2h-2zM1791 701h2v2h-2zM1812 701h2v2h-2zM1832 701h2v2h-2zM1853 701h2v2h-2zM1873 701h2v2h-2zM1894 701h2v2h-2zM14 721h2v2h-2zM35 721h2v2h-2zM55 721h2v2h-2zM76 721h2v2h-2zM96 721h2v2h-2zM117 721h2v2h-2zM137 721h2v2h-2zM157 721h2v2h-2zM178 721h2v2h-2zM198 721h2v2h-2zM219 721h2v2h-2zM239 721h2v2h-2zM260 721h2v2h-2zM280 721h2v2h-2zM300 721h2v2h-2zM321 721h2v2h-2zM341 721h2v2h-2zM362 721h2v2h-2zM382 721h2v2h-2zM403 721h2v2h-2zM423 721h2v2h-2zM443 721h2v2h-2zM464 721h2v2h-2zM484 721h2v2h-2zM505 721h2v2h-2zM525 721h2v2h-2zM546 721h2v2h-2zM566 721h2v2h-2zM586 721h2v2h-2zM607 721h2v2h-2zM627 721h2v2h-2zM648 721h2v2h-2zM668 721h2v2h-2zM689 721h2v2h-2zM709 721h2v2h-2zM729 721h2v2h-2zM750 721h2v2h-2zM770 721h2v2h-2zM791 721h2v2h-2zM811 721h2v2h-2zM832 721h2v2h-2zM852 721h2v2h-2zM872 721h2v2h-2zM893 721h2v2h-2zM913 721h2v2h-2zM934 721h2v2h-2zM954 721h2v2h-2zM974 721h2v2h-2zM995 721h2v2h-2zM1015 721h2v2h-2zM1036 721h2v2h-2zM1056 721h2v2h-2zM1077 721h2v2h-2zM1097 721h2v2h-2zM1117 721h2v2h-2zM1138 721h2v2h-2zM1158 721h2v2h-2zM1179 721h2v2h-2zM1199 721h2v2h-2zM1220 721h2v2h-2zM1240 721h2v2h-2zM1260 721h2v2h-2zM1281 721h2v2h-2zM1301 721h2v2h-2zM1322 721h2v2h-2zM1342 721h2v2h-2zM1363 721h2v2h-2zM1383 721h2v2h-2zM1403 721h2v2h-2zM1424 721h2v2h-2zM1444 721h2v2h-2zM1465 721h2v2h-2zM1485 721h2v2h-2zM1506 721h2v2h-2zM1526 721h2v2h-2zM1546 721h2v2h-2zM1567 721h2v2h-2zM1587 721h2v2h-2zM1608 721h2v2h-2zM1628 721h2v2h-2zM1648 721h2v2h-2zM1669 721h2v2h-2zM1689 721h2v2h-2zM1710 721h2v2h-2zM1730 721h2v2h-2zM1751 721h2v2h-2zM1771 721h2v2h-2zM1791 721h2v2h-2zM1812 721h2v2h-2zM1832 721h2v2h-2zM1853 721h2v2h-2zM1873 721h2v2h-2zM1894 721h2v2h-2zM14 742h2v2h-2zM35 742h2v2h-2zM55 742h2v2h-2zM76 742h2v2h-2zM96 742h2v2h-2zM117 742h2v2h-2zM137 742h2v2h-2zM157 742h2v2h-2zM178 742h2v2h-2zM198 742h2v2h-2zM219 742h2v2h-2zM239 742h2v2h-2zM260 742h2v2h-2zM280 742h2v2h-2zM300 742h2v2h-2zM321 742h2v2h-2zM341 742h2v2h-2zM362 742h2v2h-2zM382 742h2v2h-2zM403 742h2v2h-2zM423 742h2v2h-2zM443 742h2v2h-2zM464 742h2v2h-2zM484 742h2v2h-2zM505 742h2v2h-2zM525 742h2v2h-2zM546 742h2v2h-2zM566 742h2v2h-2zM586 742h2v2h-2zM607 742h2v2h-2zM627 742h2v2h-2zM648 742h2v2h-2zM668 742h2v2h-2zM689 742h2v2h-2zM709 742h2v2h-2zM729 742h2v2h-2zM750 742h2v2h-2zM770 742h2v2h-2zM791 742h2v2h-2zM811 742h2v2h-2zM832 742h2v2h-2zM852 742h2v2h-2zM872 742h2v2h-2zM893 742h2v2h-2zM913 742h2v2h-2zM934 742h2v2h-2zM954 742h2v2h-2zM974 742h2v2h-2zM995 742h2v2h-2zM1015 742h2v2h-2zM1036 742h2v2h-2zM1056 742h2v2h-2zM1077 742h2v2h-2zM1097 742h2v2h-2zM1117 742h2v2h-2zM1138 742h2v2h-2zM1158 742h2v2h-2zM1179 742h2v2h-2zM1199 742h2v2h-2zM1220 742h2v2h-2zM1240 742h2v2h-2zM1260 742h2v2h-2zM1281 742h2v2h-2zM1301 742h2v2h-2zM1322 742h2v2h-2zM1342 742h2v2h-2zM1363 742h2v2h-2zM1383 742h2v2h-2zM1403 742h2v2h-2zM1424 742h2v2h-2zM1444 742h2v2h-2zM1465 742h2v2h-2zM1485 742h2v2h-2zM1506 742h2v2h-2zM1526 742h2v2h-2zM1546 742h2v2h-2zM1567 742h2v2h-2zM1587 742h2v2h-2zM1608 742h2v2h-2zM1628 742h2v2h-2zM1648 742h2v2h-2zM1669 742h2v2h-2zM1689 742h2v2h-2zM1710 742h2v2h-2zM1730 742h2v2h-2zM1751 742h2v2h-2zM1771 742h2v2h-2zM1791 742h2v2h-2zM1812 742h2v2h-2zM1832 742h2v2h-2zM1853 742h2v2h-2zM1873 742h2v2h-2zM1894 742h2v2h-2zM35 762h2v2h-2zM55 762h2v2h-2zM76 762h2v2h-2zM96 762h2v2h-2zM137 762h2v2h-2zM157 762h2v2h-2zM178 762h2v2h-2zM198 762h2v2h-2zM239 762h2v2h-2zM260 762h2v2h-2zM280 762h2v2h-2zM300 762h2v2h-2zM341 762h2v2h-2zM362 762h2v2h-2zM382 762h2v2h-2zM403 762h2v2h-2zM443 762h2v2h-2zM464 762h2v2h-2zM484 762h2v2h-2zM505 762h2v2h-2zM546 762h2v2h-2zM566 762h2v2h-2zM586 762h2v2h-2zM607 762h2v2h-2zM648 762h2v2h-2zM668 762h2v2h-2zM689 762h2v2h-2zM709 762h2v2h-2zM750 762h2v2h-2zM770 762h2v2h-2zM791 762h2v2h-2zM811 762h2v2h-2zM852 762h2v2h-2zM872 762h2v2h-2zM893 762h2v2h-2zM913 762h2v2h-2zM954 762h2v2h-2zM974 762h2v2h-2zM995 762h2v2h-2zM1015 762h2v2h-2zM1056 762h2v2h-2zM1077 762h2v2h-2zM1097 762h2v2h-2zM1117 762h2v2h-2zM1158 762h2v2h-2zM1179 762h2v2h-2zM1199 762h2v2h-2zM1220 762h2v2h-2zM1260 762h2v2h-2zM1281 762h2v2h-2zM1301 762h2v2h-2zM1322 762h2v2h-2zM1363 762h2v2h-2zM1383 762h2v2h-2zM1403 762h2v2h-2zM1424 762h2v2h-2zM1465 762h2v2h-2zM1485 762h2v2h-2zM1506 762h2v2h-2zM1526 762h2v2h-2zM1567 762h2v2h-2zM1587 762h2v2h-2zM1608 762h2v2h-2zM1628 762h2v2h-2zM1669 762h2v2h-2zM1689 762h2v2h-2zM1710 762h2v2h-2zM1730 762h2v2h-2zM1771 762h2v2h-2zM1791 762h2v2h-2zM1812 762h2v2h-2zM1832 762h2v2h-2zM1873 762h2v2h-2zM1894 762h2v2h-2zM14 783h2v2h-2zM35 783h2v2h-2zM55 783h2v2h-2zM76 783h2v2h-2zM96 783h2v2h-2zM117 783h2v2h-2zM137 783h2v2h-2zM157 783h2v2h-2zM178 783h2v2h-2zM198 783h2v2h-2zM219 783h2v2h-2zM239 783h2v2h-2zM260 783h2v2h-2zM280 783h2v2h-2zM300 783h2v2h-2zM321 783h2v2h-2zM341 783h2v2h-2zM362 783h2v2h-2zM382 783h2v2h-2zM403 783h2v2h-2zM423 783h2v2h-2zM443 783h2v2h-2zM464 783h2v2h-2zM484 783h2v2h-2zM505 783h2v2h-2zM525 783h2v2h-2zM546 783h2v2h-2zM566 783h2v2h-2zM586 783h2v2h-2zM607 783h2v2h-2zM627 783h2v2h-2zM648 783h2v2h-2zM668 783h2v2h-2zM689 783h2v2h-2zM709 783h2v2h-2zM729 783h2v2h-2zM750 783h2v2h-2zM770 783h2v2h-2zM791 783h2v2h-2zM811 783h2v2h-2zM832 783h2v2h-2zM852 783h2v2h-2zM872 783h2v2h-2zM893 783h2v2h-2zM913 783h2v2h-2zM934 783h2v2h-2zM954 783h2v2h-2zM974 783h2v2h-2zM995 783h2v2h-2zM1015 783h2v2h-2zM1036 783h2v2h-2zM1056 783h2v2h-2zM1077 783h2v2h-2zM1097 783h2v2h-2zM1117 783h2v2h-2zM1138 783h2v2h-2zM1158 783h2v2h-2zM1179 783h2v2h-2zM1199 783h2v2h-2zM1220 783h2v2h-2zM1240 783h2v2h-2zM1260 783h2v2h-2zM1281 783h2v2h-2zM1301 783h2v2h-2zM1322 783h2v2h-2zM1342 783h2v2h-2zM1363 783h2v2h-2zM1383 783h2v2h-2zM1403 783h2v2h-2zM1424 783h2v2h-2zM1444 783h2v2h-2zM1465 783h2v2h-2zM1485 783h2v2h-2zM1506 783h2v2h-2zM1526 783h2v2h-2zM1546 783h2v2h-2zM1567 783h2v2h-2zM1587 783h2v2h-2zM1608 783h2v2h-2zM1628 783h2v2h-2zM1648 783h2v2h-2zM1669 783h2v2h-2zM1689 783h2v2h-2zM1710 783h2v2h-2zM1730 783h2v2h-2zM1751 783h2v2h-2zM1771 783h2v2h-2zM1791 783h2v2h-2zM1812 783h2v2h-2zM1832 783h2v2h-2zM1853 783h2v2h-2zM1873 783h2v2h-2zM1894 783h2v2h-2zM14 803h2v2h-2zM35 803h2v2h-2zM55 803h2v2h-2zM76 803h2v2h-2zM96 803h2v2h-2zM117 803h2v2h-2zM137 803h2v2h-2zM157 803h2v2h-2zM178 803h2v2h-2zM198 803h2v2h-2zM219 803h2v2h-2zM239 803h2v2h-2zM260 803h2v2h-2zM280 803h2v2h-2zM300 803h2v2h-2zM321 803h2v2h-2zM341 803h2v2h-2zM362 803h2v2h-2zM382 803h2v2h-2zM403 803h2v2h-2zM423 803h2v2h-2zM443 803h2v2h-2zM464 803h2v2h-2zM484 803h2v2h-2zM505 803h2v2h-2zM525 803h2v2h-2zM546 803h2v2h-2zM566 803h2v2h-2zM586 803h2v2h-2zM607 803h2v2h-2zM627 803h2v2h-2zM648 803h2v2h-2zM668 803h2v2h-2zM689 803h2v2h-2zM709 803h2v2h-2zM729 803h2v2h-2zM750 803h2v2h-2zM770 803h2v2h-2zM791 803h2v2h-2zM811 803h2v2h-2zM832 803h2v2h-2zM852 803h2v2h-2zM872 803h2v2h-2zM893 803h2v2h-2zM913 803h2v2h-2zM934 803h2v2h-2zM954 803h2v2h-2zM974 803h2v2h-2zM995 803h2v2h-2zM1015 803h2v2h-2zM1036 803h2v2h-2zM1056 803h2v2h-2zM1077 803h2v2h-2zM1097 803h2v2h-2zM1117 803h2v2h-2zM1138 803h2v2h-2zM1158 803h2v2h-2zM1179 803h2v2h-2zM1199 803h2v2h-2zM1220 803h2v2h-2zM1240 803h2v2h-2zM1260 803h2v2h-2zM1281 803h2v2h-2zM1301 803h2v2h-2zM1322 803h2v2h-2zM1342 803h2v2h-2zM1363 803h2v2h-2zM1383 803h2v2h-2zM1403 803h2v2h-2zM1424 803h2v2h-2zM1444 803h2v2h-2zM1465 803h2v2h-2zM1485 803h2v2h-2zM1506 803h2v2h-2zM1526 803h2v2h-2zM1546 803h2v2h-2zM1567 803h2v2h-2zM1587 803h2v2h-2zM1608 803h2v2h-2zM1628 803h2v2h-2zM1648 803h2v2h-2zM1669 803h2v2h-2zM1689 803h2v2h-2zM1710 803h2v2h-2zM1730 803h2v2h-2zM1751 803h2v2h-2zM1771 803h2v2h-2zM1791 803h2v2h-2zM1812 803h2v2h-2zM1832 803h2v2h-2zM1853 803h2v2h-2zM1873 803h2v2h-2zM1894 803h2v2h-2zM14 824h2v2h-2zM35 824h2v2h-2zM55 824h2v2h-2zM76 824h2v2h-2zM96 824h2v2h-2zM117 824h2v2h-2zM137 824h2v2h-2zM157 824h2v2h-2zM178 824h2v2h-2zM198 824h2v2h-2zM219 824h2v2h-2zM239 824h2v2h-2zM260 824h2v2h-2zM280 824h2v2h-2zM300 824h2v2h-2zM321 824h2v2h-2zM341 824h2v2h-2zM362 824h2v2h-2zM382 824h2v2h-2zM403 824h2v2h-2zM423 824h2v2h-2zM443 824h2v2h-2zM464 824h2v2h-2zM484 824h2v2h-2zM505 824h2v2h-2zM525 824h2v2h-2zM546 824h2v2h-2zM566 824h2v2h-2zM586 824h2v2h-2zM607 824h2v2h-2zM627 824h2v2h-2zM648 824h2v2h-2zM668 824h2v2h-2zM689 824h2v2h-2zM709 824h2v2h-2zM729 824h2v2h-2zM750 824h2v2h-2zM770 824h2v2h-2zM791 824h2v2h-2zM811 824h2v2h-2zM832 824h2v2h-2zM852 824h2v2h-2zM872 824h2v2h-2zM893 824h2v2h-2zM913 824h2v2h-2zM934 824h2v2h-2zM954 824h2v2h-2zM974 824h2v2h-2zM995 824h2v2h-2zM1015 824h2v2h-2zM1036 824h2v2h-2zM1056 824h2v2h-2zM1077 824h2v2h-2zM1097 824h2v2h-2zM1117 824h2v2h-2zM1138 824h2v2h-2zM1158 824h2v2h-2zM1179 824h2v2h-2zM1199 824h2v2h-2zM1220 824h2v2h-2zM1240 824h2v2h-2zM1260 824h2v2h-2zM1281 824h2v2h-2zM1301 824h2v2h-2zM1322 824h2v2h-2zM1342 824h2v2h-2zM1363 824h2v2h-2zM1383 824h2v2h-2zM1403 824h2v2h-2zM1424 824h2v2h-2zM1444 824h2v2h-2zM1465 824h2v2h-2zM1485 824h2v2h-2zM1506 824h2v2h-2zM1526 824h2v2h-2zM1546 824h2v2h-2zM1567 824h2v2h-2zM1587 824h2v2h-2zM1608 824h2v2h-2zM1628 824h2v2h-2zM1648 824h2v2h-2zM1669 824h2v2h-2zM1689 824h2v2h-2zM1710 824h2v2h-2zM1730 824h2v2h-2zM1751 824h2v2h-2zM1771 824h2v2h-2zM1791 824h2v2h-2zM1812 824h2v2h-2zM1832 824h2v2h-2zM1853 824h2v2h-2zM1873 824h2v2h-2zM1894 824h2v2h-2zM14 844h2v2h-2zM35 844h2v2h-2zM55 844h2v2h-2zM76 844h2v2h-2zM96 844h2v2h-2zM117 844h2v2h-2zM137 844h2v2h-2zM157 844h2v2h-2zM178 844h2v2h-2zM198 844h2v2h-2zM219 844h2v2h-2zM239 844h2v2h-2zM260 844h2v2h-2zM280 844h2v2h-2zM300 844h2v2h-2zM321 844h2v2h-2zM341 844h2v2h-2zM362 844h2v2h-2zM382 844h2v2h-2zM403 844h2v2h-2zM423 844h2v2h-2zM443 844h2v2h-2zM464 844h2v2h-2zM484 844h2v2h-2zM505 844h2v2h-2zM525 844h2v2h-2zM546 844h2v2h-2zM566 844h2v2h-2zM586 844h2v2h-2zM607 844h2v2h-2zM627 844h2v2h-2zM648 844h2v2h-2zM668 844h2v2h-2zM689 844h2v2h-2zM709 844h2v2h-2zM729 844h2v2h-2zM750 844h2v2h-2zM770 844h2v2h-2zM791 844h2v2h-2zM811 844h2v2h-2zM832 844h2v2h-2zM852 844h2v2h-2zM872 844h2v2h-2zM893 844h2v2h-2zM913 844h2v2h-2zM934 844h2v2h-2zM954 844h2v2h-2zM974 844h2v2h-2zM995 844h2v2h-2zM1015 844h2v2h-2zM1036 844h2v2h-2zM1056 844h2v2h-2zM1077 844h2v2h-2zM1097 844h2v2h-2zM1117 844h2v2h-2zM1138 844h2v2h-2zM1158 844h2v2h-2zM1179 844h2v2h-2zM1199 844h2v2h-2zM1220 844h2v2h-2zM1240 844h2v2h-2zM1260 844h2v2h-2zM1281 844h2v2h-2zM1301 844h2v2h-2zM1322 844h2v2h-2zM1342 844h2v2h-2zM1363 844h2v2h-2zM1383 844h2v2h-2zM1403 844h2v2h-2zM1424 844h2v2h-2zM1444 844h2v2h-2zM1465 844h2v2h-2zM1485 844h2v2h-2zM1506 844h2v2h-2zM1526 844h2v2h-2zM1546 844h2v2h-2zM1567 844h2v2h-2zM1587 844h2v2h-2zM1608 844h2v2h-2zM1628 844h2v2h-2zM1648 844h2v2h-2zM1669 844h2v2h-2zM1689 844h2v2h-2zM1710 844h2v2h-2zM1730 844h2v2h-2zM1751 844h2v2h-2zM1771 844h2v2h-2zM1791 844h2v2h-2zM1812 844h2v2h-2zM1832 844h2v2h-2zM1853 844h2v2h-2zM1873 844h2v2h-2zM1894 844h2v2h-2zM35 864h2v2h-2zM55 864h2v2h-2zM76 864h2v2h-2zM96 864h2v2h-2zM137 864h2v2h-2zM157 864h2v2h-2zM178 864h2v2h-2zM198 864h2v2h-2zM239 864h2v2h-2zM260 864h2v2h-2zM280 864h2v2h-2zM300 864h2v2h-2zM341 864h2v2h-2zM362 864h2v2h-2zM382 864h2v2h-2zM403 864h2v2h-2zM443 864h2v2h-2zM464 864h2v2h-2zM484 864h2v2h-2zM505 864h2v2h-2zM546 864h2v2h-2zM566 864h2v2h-2zM586 864h2v2h-2zM607 864h2v2h-2zM648 864h2v2h-2zM668 864h2v2h-2zM689 864h2v2h-2zM709 864h2v2h-2zM750 864h2v2h-2zM770 864h2v2h-2zM791 864h2v2h-2zM811 864h2v2h-2zM852 864h2v2h-2zM872 864h2v2h-2zM893 864h2v2h-2zM913 864h2v2h-2zM954 864h2v2h-2zM974 864h2v2h-2zM995 864h2v2h-2zM1015 864h2v2h-2zM1056 864h2v2h-2zM1077 864h2v2h-2zM1097 864h2v2h-2zM1117 864h2v2h-2zM1158 864h2v2h-2zM1179 864h2v2h-2zM1199 864h2v2h-2zM1220 864h2v2h-2zM1260 864h2v2h-2zM1281 864h2v2h-2zM1301 864h2v2h-2zM1322 864h2v2h-2zM1363 864h2v2h-2zM1383 864h2v2h-2zM1403 864h2v2h-2zM1424 864h2v2h-2zM1465 864h2v2h-2zM1485 864h2v2h-2zM1506 864h2v2h-2zM1526 864h2v2h-2zM1567 864h2v2h-2zM1587 864h2v2h-2zM1608 864h2v2h-2zM1628 864h2v2h-2zM1669 864h2v2h-2zM1689 864h2v2h-2zM1710 864h2v2h-2zM1730 864h2v2h-2zM1771 864h2v2h-2zM1791 864h2v2h-2zM1812 864h2v2h-2zM1832 864h2v2h-2zM1873 864h2v2h-2zM1894 864h2v2h-2zM14 885h2v2h-2zM35 885h2v2h-2zM55 885h2v2h-2zM76 885h2v2h-2zM96 885h2v2h-2zM117 885h2v2h-2zM137 885h2v2h-2zM157 885h2v2h-2zM178 885h2v2h-2zM198 885h2v2h-2zM219 885h2v2h-2zM239 885h2v2h-2zM260 885h2v2h-2zM280 885h2v2h-2zM300 885h2v2h-2zM321 885h2v2h-2zM341 885h2v2h-2zM362 885h2v2h-2zM382 885h2v2h-2zM403 885h2v2h-2zM423 885h2v2h-2zM443 885h2v2h-2zM464 885h2v2h-2zM484 885h2v2h-2zM505 885h2v2h-2zM525 885h2v2h-2zM546 885h2v2h-2zM566 885h2v2h-2zM586 885h2v2h-2zM607 885h2v2h-2zM627 885h2v2h-2zM648 885h2v2h-2zM668 885h2v2h-2zM689 885h2v2h-2zM709 885h2v2h-2zM729 885h2v2h-2zM750 885h2v2h-2zM770 885h2v2h-2zM791 885h2v2h-2zM811 885h2v2h-2zM832 885h2v2h-2zM852 885h2v2h-2zM872 885h2v2h-2zM893 885h2v2h-2zM913 885h2v2h-2zM934 885h2v2h-2zM954 885h2v2h-2zM974 885h2v2h-2zM995 885h2v2h-2zM1015 885h2v2h-2zM1036 885h2v2h-2zM1056 885h2v2h-2zM1077 885h2v2h-2zM1097 885h2v2h-2zM1117 885h2v2h-2zM1138 885h2v2h-2zM1158 885h2v2h-2zM1179 885h2v2h-2zM1199 885h2v2h-2zM1220 885h2v2h-2zM1240 885h2v2h-2zM1260 885h2v2h-2zM1281 885h2v2h-2zM1301 885h2v2h-2zM1322 885h2v2h-2zM1342 885h2v2h-2zM1363 885h2v2h-2zM1383 885h2v2h-2zM1403 885h2v2h-2zM1424 885h2v2h-2zM1444 885h2v2h-2zM1465 885h2v2h-2zM1485 885h2v2h-2zM1506 885h2v2h-2zM1526 885h2v2h-2zM1546 885h2v2h-2zM1567 885h2v2h-2zM1587 885h2v2h-2zM1608 885h2v2h-2zM1628 885h2v2h-2zM1648 885h2v2h-2zM1669 885h2v2h-2zM1689 885h2v2h-2zM1710 885h2v2h-2zM1730 885h2v2h-2zM1751 885h2v2h-2zM1771 885h2v2h-2zM1791 885h2v2h-2zM1812 885h2v2h-2zM1832 885h2v2h-2zM1853 885h2v2h-2zM1873 885h2v2h-2zM1894 885h2v2h-2zM14 905h2v2h-2zM35 905h2v2h-2zM55 905h2v2h-2zM76 905h2v2h-2zM96 905h2v2h-2zM117 905h2v2h-2zM137 905h2v2h-2zM157 905h2v2h-2zM178 905h2v2h-2zM198 905h2v2h-2zM219 905h2v2h-2zM239 905h2v2h-2zM260 905h2v2h-2zM280 905h2v2h-2zM300 905h2v2h-2zM321 905h2v2h-2zM341 905h2v2h-2zM362 905h2v2h-2zM382 905h2v2h-2zM403 905h2v2h-2zM423 905h2v2h-2zM443 905h2v2h-2zM464 905h2v2h-2zM484 905h2v2h-2zM505 905h2v2h-2zM525 905h2v2h-2zM546 905h2v2h-2zM566 905h2v2h-2zM586 905h2v2h-2zM607 905h2v2h-2zM627 905h2v2h-2zM648 905h2v2h-2zM668 905h2v2h-2zM689 905h2v2h-2zM709 905h2v2h-2zM729 905h2v2h-2zM750 905h2v2h-2zM770 905h2v2h-2zM791 905h2v2h-2zM811 905h2v2h-2zM832 905h2v2h-2zM852 905h2v2h-2zM872 905h2v2h-2zM893 905h2v2h-2zM913 905h2v2h-2zM934 905h2v2h-2zM954 905h2v2h-2zM974 905h2v2h-2zM995 905h2v2h-2zM1015 905h2v2h-2zM1036 905h2v2h-2zM1056 905h2v2h-2zM1077 905h2v2h-2zM1097 905h2v2h-2zM1117 905h2v2h-2zM1138 905h2v2h-2zM1158 905h2v2h-2zM1179 905h2v2h-2zM1199 905h2v2h-2zM1220 905h2v2h-2zM1240 905h2v2h-2zM1260 905h2v2h-2zM1281 905h2v2h-2zM1301 905h2v2h-2zM1322 905h2v2h-2zM1342 905h2v2h-2zM1363 905h2v2h-2zM1383 905h2v2h-2zM1403 905h2v2h-2zM1424 905h2v2h-2zM1444 905h2v2h-2zM1465 905h2v2h-2zM1485 905h2v2h-2zM1506 905h2v2h-2zM1526 905h2v2h-2zM1546 905h2v2h-2zM1567 905h2v2h-2zM1587 905h2v2h-2zM1608 905h2v2h-2zM1628 905h2v2h-2zM1648 905h2v2h-2zM1669 905h2v2h-2zM1689 905h2v2h-2zM1710 905h2v2h-2zM1730 905h2v2h-2zM1751 905h2v2h-2zM1771 905h2v2h-2zM1791 905h2v2h-2zM1812 905h2v2h-2zM1832 905h2v2h-2zM1853 905h2v2h-2zM1873 905h2v2h-2zM1894 905h2v2h-2zM14 926h2v2h-2zM35 926h2v2h-2zM55 926h2v2h-2zM76 926h2v2h-2zM96 926h2v2h-2zM117 926h2v2h-2zM137 926h2v2h-2zM157 926h2v2h-2zM178 926h2v2h-2zM198 926h2v2h-2zM219 926h2v2h-2zM239 926h2v2h-2zM260 926h2v2h-2zM280 926h2v2h-2zM300 926h2v2h-2zM321 926h2v2h-2zM341 926h2v2h-2zM362 926h2v2h-2zM382 926h2v2h-2zM403 926h2v2h-2zM423 926h2v2h-2zM443 926h2v2h-2zM464 926h2v2h-2zM484 926h2v2h-2zM505 926h2v2h-2zM525 926h2v2h-2zM546 926h2v2h-2zM566 926h2v2h-2zM586 926h2v2h-2zM607 926h2v2h-2zM627 926h2v2h-2zM648 926h2v2h-2zM668 926h2v2h-2zM689 926h2v2h-2zM709 926h2v2h-2zM729 926h2v2h-2zM750 926h2v2h-2zM770 926h2v2h-2zM791 926h2v2h-2zM811 926h2v2h-2zM832 926h2v2h-2zM852 926h2v2h-2zM872 926h2v2h-2zM893 926h2v2h-2zM913 926h2v2h-2zM934 926h2v2h-2zM954 926h2v2h-2zM974 926h2v2h-2zM995 926h2v2h-2zM1015 926h2v2h-2zM1036 926h2v2h-2zM1056 926h2v2h-2zM1077 926h2v2h-2zM1097 926h2v2h-2zM1117 926h2v2h-2zM1138 926h2v2h-2zM1158 926h2v2h-2zM1179 926h2v2h-2zM1199 926h2v2h-2zM1220 926h2v2h-2zM1240 926h2v2h-2zM1260 926h2v2h-2zM1281 926h2v2h-2zM1301 926h2v2h-2zM1322 926h2v2h-2zM1342 926h2v2h-2zM1363 926h2v2h-2zM1383 926h2v2h-2zM1403 926h2v2h-2zM1424 926h2v2h-2zM1444 926h2v2h-2zM1465 926h2v2h-2zM1485 926h2v2h-2zM1506 926h2v2h-2zM1526 926h2v2h-2zM1546 926h2v2h-2zM1567 926h2v2h-2zM1587 926h2v2h-2zM1608 926h2v2h-2zM1628 926h2v2h-2zM1648 926h2v2h-2zM1669 926h2v2h-2zM1689 926h2v2h-2zM1710 926h2v2h-2zM1730 926h2v2h-2zM1751 926h2v2h-2zM1771 926h2v2h-2zM1791 926h2v2h-2zM1812 926h2v2h-2zM1832 926h2v2h-2zM1853 926h2v2h-2zM1873 926h2v2h-2zM1894 926h2v2h-2zM14 946h2v2h-2zM35 946h2v2h-2zM55 946h2v2h-2zM76 946h2v2h-2zM96 946h2v2h-2zM117 946h2v2h-2zM137 946h2v2h-2zM157 946h2v2h-2zM178 946h2v2h-2zM198 946h2v2h-2zM219 946h2v2h-2zM239 946h2v2h-2zM260 946h2v2h-2zM280 946h2v2h-2zM300 946h2v2h-2zM321 946h2v2h-2zM341 946h2v2h-2zM362 946h2v2h-2zM382 946h2v2h-2zM403 946h2v2h-2zM423 946h2v2h-2zM443 946h2v2h-2zM464 946h2v2h-2zM484 946h2v2h-2zM505 946h2v2h-2zM525 946h2v2h-2zM546 946h2v2h-2zM566 946h2v2h-2zM586 946h2v2h-2zM607 946h2v2h-2zM627 946h2v2h-2zM648 946h2v2h-2zM668 946h2v2h-2zM689 946h2v2h-2zM709 946h2v2h-2zM729 946h2v2h-2zM750 946h2v2h-2zM770 946h2v2h-2zM791 946h2v2h-2zM811 946h2v2h-2zM832 946h2v2h-2zM852 946h2v2h-2zM872 946h2v2h-2zM893 946h2v2h-2zM913 946h2v2h-2zM934 946h2v2h-2zM954 946h2v2h-2zM974 946h2v2h-2zM995 946h2v2h-2zM1015 946h2v2h-2zM1036 946h2v2h-2zM1056 946h2v2h-2zM1077 946h2v2h-2zM1097 946h2v2h-2zM1117 946h2v2h-2zM1138 946h2v2h-2zM1158 946h2v2h-2zM1179 946h2v2h-2zM1199 946h2v2h-2zM1220 946h2v2h-2zM1240 946h2v2h-2zM1260 946h2v2h-2zM1281 946h2v2h-2zM1301 946h2v2h-2zM1322 946h2v2h-2zM1342 946h2v2h-2zM1363 946h2v2h-2zM1383 946h2v2h-2zM1403 946h2v2h-2zM1424 946h2v2h-2zM1444 946h2v2h-2zM1465 946h2v2h-2zM1485 946h2v2h-2zM1506 946h2v2h-2zM1526 946h2v2h-2zM1546 946h2v2h-2zM1567 946h2v2h-2zM1587 946h2v2h-2zM1608 946h2v2h-2zM1628 946h2v2h-2zM1648 946h2v2h-2zM1669 946h2v2h-2zM1689 946h2v2h-2zM1710 946h2v2h-2zM1730 946h2v2h-2zM1751 946h2v2h-2zM1771 946h2v2h-2zM1791 946h2v2h-2zM1812 946h2v2h-2zM1832 946h2v2h-2zM1853 946h2v2h-2zM1873 946h2v2h-2zM1894 946h2v2h-2zM35 967h2v2h-2zM55 967h2v2h-2zM76 967h2v2h-2zM96 967h2v2h-2zM137 967h2v2h-2zM157 967h2v2h-2zM178 967h2v2h-2zM198 967h2v2h-2zM239 967h2v2h-2zM260 967h2v2h-2zM280 967h2v2h-2zM300 967h2v2h-2zM341 967h2v2h-2zM362 967h2v2h-2zM382 967h2v2h-2zM403 967h2v2h-2zM443 967h2v2h-2zM464 967h2v2h-2zM484 967h2v2h-2zM505 967h2v2h-2zM546 967h2v2h-2zM566 967h2v2h-2zM586 967h2v2h-2zM607 967h2v2h-2zM648 967h2v2h-2zM668 967h2v2h-2zM689 967h2v2h-2zM709 967h2v2h-2zM750 967h2v2h-2zM770 967h2v2h-2zM791 967h2v2h-2zM811 967h2v2h-2zM852 967h2v2h-2zM872 967h2v2h-2zM893 967h2v2h-2zM913 967h2v2h-2zM954 967h2v2h-2zM974 967h2v2h-2zM995 967h2v2h-2zM1015 967h2v2h-2zM1056 967h2v2h-2zM1077 967h2v2h-2zM1097 967h2v2h-2zM1117 967h2v2h-2zM1158 967h2v2h-2zM1179 967h2v2h-2zM1199 967h2v2h-2zM1220 967h2v2h-2zM1260 967h2v2h-2zM1281 967h2v2h-2zM1301 967h2v2h-2zM1322 967h2v2h-2zM1363 967h2v2h-2zM1383 967h2v2h-2zM1403 967h2v2h-2zM1424 967h2v2h-2zM1465 967h2v2h-2zM1485 967h2v2h-2zM1506 967h2v2h-2zM1526 967h2v2h-2zM1567 967h2v2h-2zM1587 967h2v2h-2zM1608 967h2v2h-2zM1628 967h2v2h-2zM1669 967h2v2h-2zM1689 967h2v2h-2zM1710 967h2v2h-2zM1730 967h2v2h-2zM1771 967h2v2h-2zM1791 967h2v2h-2zM1812 967h2v2h-2zM1832 967h2v2h-2zM1873 967h2v2h-2zM1894 967h2v2h-2z"/><path fill="#313131" d="M14 149h2v2h-2zM117 149h2v2h-2zM219 149h2v2h-2zM321 149h2v2h-2zM423 149h2v2h-2zM525 149h2v2h-2zM627 149h2v2h-2zM729 149h2v2h-2zM832 149h2v2h-2zM934 149h2v2h-2zM1036 149h2v2h-2zM1138 149h2v2h-2zM1240 149h2v2h-2zM1342 149h2v2h-2zM1444 149h2v2h-2zM1546 149h2v2h-2zM1648 149h2v2h-2zM1751 149h2v2h-2zM1853 149h2v2h-2zM14 252h2v2h-2zM117 252h2v2h-2zM219 252h2v2h-2zM321 252h2v2h-2zM423 252h2v2h-2zM525 252h2v2h-2zM627 252h2v2h-2zM729 252h2v2h-2zM832 252h2v2h-2zM934 252h2v2h-2zM1036 252h2v2h-2zM1138 252h2v2h-2zM1240 252h2v2h-2zM1342 252h2v2h-2zM1444 252h2v2h-2zM1546 252h2v2h-2zM1648 252h2v2h-2zM1751 252h2v2h-2zM1853 252h2v2h-2zM14 354h2v2h-2zM117 354h2v2h-2zM219 354h2v2h-2zM321 354h2v2h-2zM423 354h2v2h-2zM525 354h2v2h-2zM627 354h2v2h-2zM729 354h2v2h-2zM832 354h2v2h-2zM934 354h2v2h-2zM1036 354h2v2h-2zM1138 354h2v2h-2zM1240 354h2v2h-2zM1342 354h2v2h-2zM1444 354h2v2h-2zM1546 354h2v2h-2zM1648 354h2v2h-2zM1751 354h2v2h-2zM1853 354h2v2h-2zM14 456h2v2h-2zM117 456h2v2h-2zM219 456h2v2h-2zM321 456h2v2h-2zM423 456h2v2h-2zM525 456h2v2h-2zM627 456h2v2h-2zM729 456h2v2h-2zM832 456h2v2h-2zM934 456h2v2h-2zM1036 456h2v2h-2zM1138 456h2v2h-2zM1240 456h2v2h-2zM1342 456h2v2h-2zM1444 456h2v2h-2zM1546 456h2v2h-2zM1648 456h2v2h-2zM1751 456h2v2h-2zM1853 456h2v2h-2zM14 558h2v2h-2zM117 558h2v2h-2zM219 558h2v2h-2zM321 558h2v2h-2zM423 558h2v2h-2zM525 558h2v2h-2zM627 558h2v2h-2zM729 558h2v2h-2zM832 558h2v2h-2zM934 558h2v2h-2zM1036 558h2v2h-2zM1138 558h2v2h-2zM1240 558h2v2h-2zM1342 558h2v2h-2zM1444 558h2v2h-2zM1546 558h2v2h-2zM1648 558h2v2h-2zM1751 558h2v2h-2zM1853 558h2v2h-2zM14 660h2v2h-2zM117 660h2v2h-2zM219 660h2v2h-2zM321 660h2v2h-2zM423 660h2v2h-2zM525 660h2v2h-2zM627 660h2v2h-2zM729 660h2v2h-2zM832 660h2v2h-2zM934 660h2v2h-2zM1036 660h2v2h-2zM1138 660h2v2h-2zM1240 660h2v2h-2zM1342 660h2v2h-2zM1444 660h2v2h-2zM1546 660h2v2h-2zM1648 660h2v2h-2zM1751 660h2v2h-2zM1853 660h2v2h-2zM14 762h2v2h-2zM117 762h2v2h-2zM219 762h2v2h-2zM321 762h2v2h-2zM423 762h2v2h-2zM525 762h2v2h-2zM627 762h2v2h-2zM729 762h2v2h-2zM832 762h2v2h-2zM934 762h2v2h-2zM1036 762h2v2h-2zM1138 762h2v2h-2zM1240 762h2v2h-2zM1342 762h2v2h-2zM1444 762h2v2h-2zM1546 762h2v2h-2zM1648 762h2v2h-2zM1751 762h2v2h-2zM1853 762h2v2h-2zM14 864h2v2h-2zM117 864h2v2h-2zM219 864h2v2h-2zM321 864h2v2h-2zM423 864h2v2h-2zM525 864h2v2h-2zM627 864h2v2h-2zM729 864h2v2h-2zM832 864h2v2h-2zM934 864h2v2h-2zM1036 864h2v2h-2zM1138 864h2v2h-2zM1240 864h2v2h-2zM1342 864h2v2h-2zM1444 864h2v2h-2zM1546 864h2v2h-2zM1648 864h2v2h-2zM1751 864h2v2h-2zM1853 864h2v2h-2zM14 967h2v2h-2zM117 967h2v2h-2zM219 967h2v2h-2zM321 967h2v2h-2zM423 967h2v2h-2zM525 967h2v2h-2zM627 967h2v2h-2zM729 967h2v2h-2zM832 967h2v2h-2zM934 967h2v2h-2zM1036 967h2v2h-2zM1138 967h2v2h-2zM1240 967h2v2h-2zM1342 967h2v2h-2zM1444 967h2v2h-2zM1546 967h2v2h-2zM1648 967h2v2h-2zM1751 967h2v2h-2zM1853 967h2v2h-2z"/></svg>
<div class="a" style="left:-6px;top:88px;width:14px;height:18px;border-radius:7px;background:#181818"></div>
<svg class="a" style="left:0px;top:92px;" width="8" height="11" viewBox="0 0 8 11"><path d="M1.5 1.5 L5.5 5.5 L1.5 9.5" fill="none" stroke="#9a9a9a" stroke-width="1.1"/></svg>
<svg class="a" style="left:18px;top:89px;" width="17" height="16" viewBox="0 0 17 16"><g fill="none" stroke="#bdbdbd" stroke-width="1"><path d="M1.5 5 V1.5 H5 M11.5 1.5 H15 V5 M15 11.5 V15 H11.5 M5 15 H1.5 V11.5"/></g><rect x="4" y="4" width="8.6" height="8.6" fill="#e8e8e8"/></svg>
<div class="t" style="left:42px;top:91.6px;font-size:11px;line-height:11px;color:#e6e6e6;">geometry</div>
<svg class="a" style="left:105.8px;top:92px;" width="9" height="11" viewBox="0 0 9 11"><path d="M1.5 1.5 L5.5 5.5 L1.5 9.5" fill="none" stroke="#c8c8c8" stroke-width="1.1"/></svg>
<svg class="a" style="left:121px;top:89px;" width="16" height="16" viewBox="0 0 16 16"><g fill="none" stroke="#e6e6e6" stroke-width="1.1"><path d="M5 3 H11 M3.6 5 L7.3 11 M12.4 5 L8.7 11"/><rect x="1.5" y="1.5" width="3" height="3"/><rect x="11.5" y="1.5" width="3" height="3"/><rect x="6.5" y="11.5" width="3" height="3"/></g></svg>
<div class="t" style="left:145.4px;top:91.6px;font-size:11px;line-height:11px;color:#e6e6e6;">involv_dinosaur_top_with_masking_Model_2_scaled_normals_simplif</div>
<svg class="a" style="left:499px;top:92px;" width="9" height="11" viewBox="0 0 9 11"><path d="M1.5 1.5 L5.5 5.5 L1.5 9.5" fill="none" stroke="#c8c8c8" stroke-width="1.1"/></svg>
<svg class="a" style="left:515px;top:89px;" width="16" height="16" viewBox="0 0 16 16"><circle cx="8" cy="8" r="6.6" fill="#e8e8e8"/><path d="M8.4 1.6 L8.4 9.65 Q11.3 9.5 14.3 7.6 A6.3 6.3 0 0 0 8.4 1.6 Z" fill="#1a1a1a"/><path d="M7.6 10 L7.6 14.3 A6.3 6.3 0 0 1 1.8 9.0 Q4.7 10 7.6 10 Z" fill="#1a1a1a"/><circle cx="8" cy="8" r="6.6" fill="none" stroke="#e8e8e8" stroke-width="1.1"/></svg>
<div class="t" style="left:539.3px;top:91.6px;font-size:11px;line-height:11px;color:#e6e6e6;">Material.002</div>
<div class="a" style="left:1914px;top:85px;width:3.00px;height:878.00px;background:#2e2e2e;border-radius:1.5px;"></div>
<div class="a" style="left:1908px;top:89px;width:16px;height:15px;border-radius:8px;background:#1b1b1b"></div>
<svg class="a" style="left:1911px;top:91px;" width="9" height="11" viewBox="0 0 9 11"><path d="M6.6 1.8 L2.2 5.5 L6.6 9.2" fill="none" stroke="#b4b4b4" stroke-width="1"/></svg>
<div class="a" style="left:9px;top:973px;width:1901.00px;height:3.00px;background:#2e2e2e;border-radius:1.5px;"></div>
<div class="a" style="left:740.3px;top:253px;width:245.00px;height:673.80px;background:#303030;border-radius:4px;box-shadow:0 0 0 1px rgba(0,0,0,0.3),0 1px 6px 2px rgba(0,0,0,0.4);overflow:hidden"><div class="a" style="left:0;top:0;width:100%;height:20.2px;background:#2d692d;border-bottom:1px solid #1f3f1f"></div></div>
<svg class="a" style="left:751px;top:260px;" width="11" height="7" viewBox="0 0 11 7"><path d="M1 1 L5.5 6 L10 1" fill="none" stroke="#d8e8d8" stroke-width="1.2"/></svg>
<div class="t" style="left:766.5px;top:257.5px;font-size:11.5px;line-height:11.5px;color:#eef5ee;text-shadow:0 0.5px 1.5px rgba(0,0,0,0.55);">Principled BSDF</div>
<div class="t" style="right:946.00px;top:283px;font-size:11.5px;line-height:11.5px;color:#e6e6e6;text-shadow:0 0.5px 1.5px rgba(0,0,0,0.55);">BSDF</div>
<div class="a" style="left:751.8px;top:309.5px;width:220.20px;height:17.40px;background:#282828;border:1px solid #3e3e3e;border-radius:4px"></div>
<div class="t" style="left:759px;top:314px;font-size:11.5px;line-height:11.5px;color:#e6e6e6;text-shadow:0 0.5px 1.5px rgba(0,0,0,0.55);">GGX</div>
<svg class="a" style="left:964px;top:317px;" width="9" height="6" viewBox="0 0 9 6"><path d="M1 1 L4.5 5 L8 1" fill="none" stroke="#d6d6d6" stroke-width="1.2"/></svg>
<div class="a" style="left:751.8px;top:334.5px;width:220.20px;height:18.00px;background:#282828;border:1px solid #3e3e3e;border-radius:4px"></div>
<div class="t" style="left:759px;top:339px;font-size:11.5px;line-height:11.5px;color:#e6e6e6;text-shadow:0 0.5px 1.5px rgba(0,0,0,0.55);">Random Walk</div>
<svg class="a" style="left:964px;top:342px;" width="9" height="6" viewBox="0 0 9 6"><path d="M1 1 L4.5 5 L8 1" fill="none" stroke="#d6d6d6" stroke-width="1.2"/></svg>
<div class="a" style="left:735.00px;top:364.80px;width:9px;height:9px;border-radius:50%;background:#c7c729;border:1px solid #101010"></div>
<div class="t" style="left:751.8px;top:365.3px;font-size:11.5px;line-height:11.5px;color:#e6e6e6;text-shadow:0 0.5px 1.5px rgba(0,0,0,0.55);">Base Color</div>
<div class="a" style="left:846px;top:361.0px;width:128.00px;height:18.60px;background:#e5e5e5;border-radius:4px;"></div>
<div class="a" style="left:735.00px;top:387.26px;width:9px;height:9px;border-radius:50%;background:#a1a1a1;border:1px solid #101010"></div>
<div class="a" style="left:751.8px;top:383.16px;width:222.2px;height:19.2px;background:#545454;border-radius:4px;overflow:hidden;box-shadow:0 1px 0 rgba(0,0,0,0.18)"></div>
<div class="t" style="left:767.2px;top:387.76px;font-size:11.5px;line-height:11.5px;color:#e6e6e6;text-shadow:0 0.5px 1.5px rgba(0,0,0,0.55);">Subsurface</div>
<div class="t" style="right:959.85px;top:387.76px;font-size:11.5px;line-height:11.5px;color:#e6e6e6;letter-spacing:0.45px;text-shadow:0 0.5px 1.5px rgba(0,0,0,0.55);">0.000</div>
<div class="a" style="left:735.00px;top:409.72px;width:9px;height:9px;border-radius:50%;background:#6363c7;border:1px solid #101010"></div>
<div class="a" style="left:751.8px;top:405.62px;width:220.20px;height:17.20px;background:#282828;border:1px solid #3e3e3e;border-radius:4px"></div>
<div class="t" style="left:759.4px;top:410.22px;font-size:11.5px;line-height:11.5px;color:#e6e6e6;text-shadow:0 0.5px 1.5px rgba(0,0,0,0.55);">Subsurface Radius</div>
<svg class="a" style="left:964px;top:413.02000000000004px;" width="9" height="6" viewBox="0 0 9 6"><path d="M1 1 L4.5 5 L8 1" fill="none" stroke="#d6d6d6" stroke-width="1.2"/></svg>
<div class="a" style="left:735.00px;top:432.18px;width:9px;height:9px;border-radius:50%;background:#c7c729;border:1px solid #101010"></div>
<div class="t" style="left:751.8px;top:432.68px;font-size:11.5px;line-height:11.5px;color:#e6e6e6;text-shadow:0 0.5px 1.5px rgba(0,0,0,0.55);">Subsurface C...</div>
<div class="a" style="left:846px;top:428.38px;width:128.00px;height:18.60px;background:#e5e5e5;border-radius:4px;"></div>
<div class="a" style="left:735.00px;top:454.64px;width:9px;height:9px;border-radius:50%;background:#a1a1a1;border:1px solid #101010"></div>
<div class="a" style="left:751.8px;top:450.54px;width:222.2px;height:19.2px;background:#545454;border-radius:4px;overflow:hidden;box-shadow:0 1px 0 rgba(0,0,0,0.18)"><div class="a" style="left:0;top:0;width:29.2px;height:100%;background:#4772b3"></div></div>
<div class="t" style="left:767.2px;top:455.14px;font-size:11.5px;line-height:11.5px;color:#e6e6e6;text-shadow:0 0.5px 1.5px rgba(0,0,0,0.55);">Subsurface IOR</div>
<div class="t" style="right:959.85px;top:455.14px;font-size:11.5px;line-height:11.5px;color:#e6e6e6;letter-spacing:0.45px;text-shadow:0 0.5px 1.5px rgba(0,0,0,0.55);">1.400</div>
<div class="a" style="left:735.00px;top:477.10px;width:9px;height:9px;border-radius:50%;background:#a1a1a1;border:1px solid #101010"></div>
<div class="a" style="left:751.8px;top:473.00px;width:222.2px;height:19.2px;background:#545454;border-radius:4px;overflow:hidden;box-shadow:0 1px 0 rgba(0,0,0,0.18)"></div>
<div class="t" style="left:767.2px;top:477.6px;font-size:11.5px;line-height:11.5px;color:#e6e6e6;text-shadow:0 0.5px 1.5px rgba(0,0,0,0.55);">Subsurface Anisotropy</div>
<div class="t" style="right:959.85px;top:477.6px;font-size:11.5px;line-height:11.5px;color:#e6e6e6;letter-spacing:0.45px;text-shadow:0 0.5px 1.5px rgba(0,0,0,0.55);">0.000</div>
<div class="a" style="left:735.00px;top:499.56px;width:9px;height:9px;border-radius:50%;background:#a1a1a1;border:1px solid #101010"></div>
<div class="a" style="left:751.8px;top:495.46px;width:222.2px;height:19.2px;background:#545454;border-radius:4px;overflow:hidden;box-shadow:0 1px 0 rgba(0,0,0,0.18)"></div>
<div class="t" style="left:767.2px;top:500.06px;font-size:11.5px;line-height:11.5px;color:#e6e6e6;text-shadow:0 0.5px 1.5px rgba(0,0,0,0.55);">Metallic</div>
<div class="t" style="right:959.85px;top:500.06px;font-size:11.5px;line-height:11.5px;color:#e6e6e6;letter-spacing:0.45px;text-shadow:0 0.5px 1.5px rgba(0,0,0,0.55);">0.000</div>
<div class="a" style="left:735.00px;top:522.02px;width:9px;height:9px;border-radius:50%;background:#a1a1a1;border:1px solid #101010"></div>
<div class="a" style="left:751.8px;top:517.92px;width:222.2px;height:19.2px;background:#545454;border-radius:4px;overflow:hidden;box-shadow:0 1px 0 rgba(0,0,0,0.18)"><div class="a" style="left:0;top:0;width:110.4px;height:100%;background:#4772b3"></div></div>
<div class="t" style="left:767.2px;top:522.52px;font-size:11.5px;line-height:11.5px;color:#e6e6e6;text-shadow:0 0.5px 1.5px rgba(0,0,0,0.55);">Specular</div>
<div class="t" style="right:959.85px;top:522.52px;font-size:11.5px;line-height:11.5px;color:#e6e6e6;letter-spacing:0.45px;text-shadow:0 0.5px 1.5px rgba(0,0,0,0.55);">0.500</div>
<div class="a" style="left:735.00px;top:544.48px;width:9px;height:9px;border-radius:50%;background:#a1a1a1;border:1px solid #101010"></div>
<div class="a" style="left:751.8px;top:540.38px;width:222.2px;height:19.2px;background:#545454;border-radius:4px;overflow:hidden;box-shadow:0 1px 0 rgba(0,0,0,0.18)"></div>
<div class="t" style="left:767.2px;top:544.98px;font-size:11.5px;line-height:11.5px;color:#e6e6e6;text-shadow:0 0.5px 1.5px rgba(0,0,0,0.55);">Specular Tint</div>
<div class="t" style="right:959.85px;top:544.98px;font-size:11.5px;line-height:11.5px;color:#e6e6e6;letter-spacing:0.45px;text-shadow:0 0.5px 1.5px rgba(0,0,0,0.55);">0.000</div>
<div class="a" style="left:735.00px;top:566.94px;width:9px;height:9px;border-radius:50%;background:#a1a1a1;border:1px solid #101010"></div>
<div class="a" style="left:751.8px;top:562.84px;width:222.2px;height:19.2px;background:#545454;border-radius:4px;overflow:hidden;box-shadow:0 1px 0 rgba(0,0,0,0.18)"><div class="a" style="left:0;top:0;width:110.4px;height:100%;background:#4772b3"></div></div>
<div class="t" style="left:767.2px;top:567.44px;font-size:11.5px;line-height:11.5px;color:#e6e6e6;text-shadow:0 0.5px 1.5px rgba(0,0,0,0.55);">Roughness</div>
<div class="t" style="right:959.85px;top:567.44px;font-size:11.5px;line-height:11.5px;color:#e6e6e6;letter-spacing:0.45px;text-shadow:0 0.5px 1.5px rgba(0,0,0,0.55);">0.500</div>
<div class="a" style="left:735.00px;top:589.40px;width:9px;height:9px;border-radius:50%;background:#a1a1a1;border:1px solid #101010"></div>
<div class="a" style="left:751.8px;top:585.30px;width:222.2px;height:19.2px;background:#545454;border-radius:4px;overflow:hidden;box-shadow:0 1px 0 rgba(0,0,0,0.18)"></div>
<div class="t" style="left:767.2px;top:589.9000000000001px;font-size:11.5px;line-height:11.5px;color:#e6e6e6;text-shadow:0 0.5px 1.5px rgba(0,0,0,0.55);">Anisotropic</div>
<div class="t" style="right:959.85px;top:589.9000000000001px;font-size:11.5px;line-height:11.5px;color:#e6e6e6;letter-spacing:0.45px;text-shadow:0 0.5px 1.5px rgba(0,0,0,0.55);">0.000</div>
<div class="a" style="left:735.00px;top:611.86px;width:9px;height:9px;border-radius:50%;background:#a1a1a1;border:1px solid #101010"></div>
<div class="a" style="left:751.8px;top:607.76px;width:222.2px;height:19.2px;background:#545454;border-radius:4px;overflow:hidden;box-shadow:0 1px 0 rgba(0,0,0,0.18)"></div>
<div class="t" style="left:767.2px;top:612.36px;font-size:11.5px;line-height:11.5px;color:#e6e6e6;text-shadow:0 0.5px 1.5px rgba(0,0,0,0.55);">Anisotropic Rotation</div>
<div class="t" style="right:959.85px;top:612.36px;font-size:11.5px;line-height:11.5px;color:#e6e6e6;letter-spacing:0.45px;text-shadow:0 0.5px 1.5px rgba(0,0,0,0.55);">0.000</div>
<div class="a" style="left:735.00px;top:634.32px;width:9px;height:9px;border-radius:50%;background:#a1a1a1;border:1px solid #101010"></div>
<div class="a" style="left:751.8px;top:630.22px;width:222.2px;height:19.2px;background:#545454;border-radius:4px;overflow:hidden;box-shadow:0 1px 0 rgba(0,0,0,0.18)"></div>
<div class="t" style="left:767.2px;top:634.8199999999999px;font-size:11.5px;line-height:11.5px;color:#e6e6e6;text-shadow:0 0.5px 1.5px rgba(0,0,0,0.55);">Sheen</div>
<div class="t" style="right:959.85px;top:634.8199999999999px;font-size:11.5px;line-height:11.5px;color:#e6e6e6;letter-spacing:0.45px;text-shadow:0 0.5px 1.5px rgba(0,0,0,0.55);">0.000</div>
<div class="a" style="left:735.00px;top:656.78px;width:9px;height:9px;border-radius:50%;background:#a1a1a1;border:1px solid #101010"></div>
<div class="a" style="left:751.8px;top:652.68px;width:222.2px;height:19.2px;background:#545454;border-radius:4px;overflow:hidden;box-shadow:0 1px 0 rgba(0,0,0,0.18)"><div class="a" style="left:0;top:0;width:110.4px;height:100%;background:#4772b3"></div></div>
<div class="t" style="left:767.2px;top:657.28px;font-size:11.5px;line-height:11.5px;color:#e6e6e6;text-shadow:0 0.5px 1.5px rgba(0,0,0,0.55);">Sheen Tint</div>
<div class="t" style="right:959.85px;top:657.28px;font-size:11.5px;line-height:11.5px;color:#e6e6e6;letter-spacing:0.45px;text-shadow:0 0.5px 1.5px rgba(0,0,0,0.55);">0.500</div>
<div class="a" style="left:735.00px;top:679.24px;width:9px;height:9px;border-radius:50%;background:#a1a1a1;border:1px solid #101010"></div>
<div class="a" style="left:751.8px;top:675.14px;width:222.2px;height:19.2px;background:#545454;border-radius:4px;overflow:hidden;box-shadow:0 1px 0 rgba(0,0,0,0.18)"></div>
<div class="t" style="left:767.2px;top:679.74px;font-size:11.5px;line-height:11.5px;color:#e6e6e6;text-shadow:0 0.5px 1.5px rgba(0,0,0,0.55);">Clearcoat</div>
<div class="t" style="right:959.85px;top:679.74px;font-size:11.5px;line-height:11.5px;color:#e6e6e6;letter-spacing:0.45px;text-shadow:0 0.5px 1.5px rgba(0,0,0,0.55);">0.000</div>
<div class="a" style="left:735.00px;top:701.70px;width:9px;height:9px;border-radius:50%;background:#a1a1a1;border:1px solid #101010"></div>
<div class="a" style="left:751.8px;top:697.60px;width:222.2px;height:19.2px;background:#545454;border-radius:4px;overflow:hidden;box-shadow:0 1px 0 rgba(0,0,0,0.18)"><div class="a" style="left:0;top:0;width:6.6px;height:100%;background:#4772b3"></div></div>
<div class="t" style="left:767.2px;top:702.2px;font-size:11.5px;line-height:11.5px;color:#e6e6e6;text-shadow:0 0.5px 1.5px rgba(0,0,0,0.55);">Clearcoat Roughness</div>
<div class="t" style="right:959.85px;top:702.2px;font-size:11.5px;line-height:11.5px;color:#e6e6e6;letter-spacing:0.45px;text-shadow:0 0.5px 1.5px rgba(0,0,0,0.55);">0.030</div>
<div class="a" style="left:735.00px;top:724.16px;width:9px;height:9px;border-radius:50%;background:#a1a1a1;border:1px solid #101010"></div>
<div class="a" style="left:751.8px;top:720.06px;width:222.2px;height:19.2px;background:#545454;border-radius:4px;overflow:hidden;box-shadow:0 1px 0 rgba(0,0,0,0.18)"></div>
<div class="t" style="left:767.2px;top:724.6600000000001px;font-size:11.5px;line-height:11.5px;color:#e6e6e6;text-shadow:0 0.5px 1.5px rgba(0,0,0,0.55);">IOR</div>
<div class="t" style="right:959.85px;top:724.6600000000001px;font-size:11.5px;line-height:11.5px;color:#e6e6e6;letter-spacing:0.45px;text-shadow:0 0.5px 1.5px rgba(0,0,0,0.55);">1.450</div>
<div class="a" style="left:735.00px;top:746.62px;width:9px;height:9px;border-radius:50%;background:#a1a1a1;border:1px solid #101010"></div>
<div class="a" style="left:751.8px;top:742.52px;width:222.2px;height:19.2px;background:#545454;border-radius:4px;overflow:hidden;box-shadow:0 1px 0 rgba(0,0,0,0.18)"></div>
<div class="t" style="left:767.2px;top:747.12px;font-size:11.5px;line-height:11.5px;color:#e6e6e6;text-shadow:0 0.5px 1.5px rgba(0,0,0,0.55);">Transmission</div>
<div class="t" style="right:959.85px;top:747.12px;font-size:11.5px;line-height:11.5px;color:#e6e6e6;letter-spacing:0.45px;text-shadow:0 0.5px 1.5px rgba(0,0,0,0.55);">0.000</div>
<div class="a" style="left:735.00px;top:769.08px;width:9px;height:9px;border-radius:50%;background:#a1a1a1;border:1px solid #101010"></div>
<div class="a" style="left:751.8px;top:764.98px;width:222.2px;height:19.2px;background:#545454;border-radius:4px;overflow:hidden;box-shadow:0 1px 0 rgba(0,0,0,0.18)"></div>
<div class="t" style="left:767.2px;top:769.58px;font-size:11.5px;line-height:11.5px;color:#e6e6e6;text-shadow:0 0.5px 1.5px rgba(0,0,0,0.55);">Transmission Roughness</div>
<div class="t" style="right:959.85px;top:769.58px;font-size:11.5px;line-height:11.5px;color:#e6e6e6;letter-spacing:0.45px;text-shadow:0 0.5px 1.5px rgba(0,0,0,0.55);">0.000</div>
<div class="a" style="left:735.00px;top:791.54px;width:9px;height:9px;border-radius:50%;background:#c7c729;border:1px solid #101010"></div>
<div class="t" style="left:751.8px;top:792.04px;font-size:11.5px;line-height:11.5px;color:#e6e6e6;text-shadow:0 0.5px 1.5px rgba(0,0,0,0.55);">Emission</div>
<div class="a" style="left:846px;top:787.7399999999999px;width:128.00px;height:18.60px;background:#000000;border-radius:4px;"></div>
<div class="a" style="left:735.00px;top:814.00px;width:9px;height:9px;border-radius:50%;background:#a1a1a1;border:1px solid #101010"></div>
<div class="a" style="left:751.8px;top:809.90px;width:222.2px;height:19.2px;background:#545454;border-radius:4px;overflow:hidden;box-shadow:0 1px 0 rgba(0,0,0,0.18)"></div>
<div class="t" style="left:767.2px;top:814.5px;font-size:11.5px;line-height:11.5px;color:#e6e6e6;text-shadow:0 0.5px 1.5px rgba(0,0,0,0.55);">Emission Strength</div>
<div class="t" style="right:959.85px;top:814.5px;font-size:11.5px;line-height:11.5px;color:#e6e6e6;letter-spacing:0.45px;text-shadow:0 0.5px 1.5px rgba(0,0,0,0.55);">1.000</div>
<div class="a" style="left:735.00px;top:836.46px;width:9px;height:9px;border-radius:50%;background:#a1a1a1;border:1px solid #101010"></div>
<div class="a" style="left:751.8px;top:832.36px;width:222.2px;height:19.2px;background:#545454;border-radius:4px;overflow:hidden;box-shadow:0 1px 0 rgba(0,0,0,0.18)"><div class="a" style="left:0;top:0;width:100%;height:100%;background:#4772b3"></div></div>
<div class="t" style="left:767.2px;top:836.96px;font-size:11.5px;line-height:11.5px;color:#e6e6e6;text-shadow:0 0.5px 1.5px rgba(0,0,0,0.55);">Alpha</div>
<div class="t" style="right:959.85px;top:836.96px;font-size:11.5px;line-height:11.5px;color:#e6e6e6;letter-spacing:0.45px;text-shadow:0 0.5px 1.5px rgba(0,0,0,0.55);">1.000</div>
<div class="a" style="left:735.00px;top:858.92px;width:9px;height:9px;border-radius:50%;background:#6363c7;border:1px solid #101010"></div>
<div class="t" style="left:751.8px;top:859.4200000000001px;font-size:11.5px;line-height:11.5px;color:#e6e6e6;text-shadow:0 0.5px 1.5px rgba(0,0,0,0.55);">Normal</div>
<div class="a" style="left:735.00px;top:881.38px;width:9px;height:9px;border-radius:50%;background:#6363c7;border:1px solid #101010"></div>
<div class="t" style="left:751.8px;top:881.8800000000001px;font-size:11.5px;line-height:11.5px;color:#e6e6e6;text-shadow:0 0.5px 1.5px rgba(0,0,0,0.55);">Clearcoat Normal</div>
<div class="a" style="left:735.00px;top:903.84px;width:9px;height:9px;border-radius:50%;background:#6363c7;border:1px solid #101010"></div>
<div class="t" style="left:751.8px;top:904.3399999999999px;font-size:11.5px;line-height:11.5px;color:#e6e6e6;text-shadow:0 0.5px 1.5px rgba(0,0,0,0.55);">Tangent</div>
<div class="a" style="left:1037.1px;top:253px;width:142.20px;height:122.80px;background:#303030;border-radius:4px;box-shadow:0 0 0 1px rgba(0,0,0,0.3),0 1px 6px 2px rgba(0,0,0,0.4);overflow:hidden"><div class="a" style="left:0;top:0;width:100%;height:20.2px;background:#3c1c23;border-bottom:1px solid #2a161a"></div></div>
<svg class="a" style="left:1047px;top:260px;" width="11" height="7" viewBox="0 0 11 7"><path d="M1 1 L5.5 6 L10 1" fill="none" stroke="#e8dcdc" stroke-width="1.2"/></svg>
<div class="t" style="left:1062.6px;top:257.5px;font-size:11.5px;line-height:11.5px;color:#f2ecec;text-shadow:0 0.5px 1.5px rgba(0,0,0,0.55);">Material Output</div>
<div class="a" style="left:1047.9px;top:278.4px;width:118.70px;height:18.40px;background:#282828;border:1px solid #3e3e3e;border-radius:4px"></div>
<div class="t" style="left:1055px;top:283px;font-size:11.5px;line-height:11.5px;color:#e6e6e6;text-shadow:0 0.5px 1.5px rgba(0,0,0,0.55);">All</div>
<svg class="a" style="left:1157.8px;top:286px;" width="8.6" height="5.8" viewBox="0 0 8.6 5.8"><path d="M1 1 L4.3 4.8 L7.6 1" fill="none" stroke="#d6d6d6" stroke-width="1.2"/></svg>
<div class="a" style="left:1031.10px;top:308.20px;width:9px;height:9px;border-radius:50%;background:#63c763;border:1px solid #101010"></div>
<div class="t" style="left:1048px;top:308.7px;font-size:11.5px;line-height:11.5px;color:#e6e6e6;text-shadow:0 0.5px 1.5px rgba(0,0,0,0.55);">Surface</div>
<div class="a" style="left:1031.10px;top:330.66px;width:9px;height:9px;border-radius:50%;background:#63c763;border:1px solid #101010"></div>
<div class="t" style="left:1048px;top:331.15999999999997px;font-size:11.5px;line-height:11.5px;color:#e6e6e6;text-shadow:0 0.5px 1.5px rgba(0,0,0,0.55);">Volume</div>
<div class="a" style="left:1031.10px;top:353.12px;width:9px;height:9px;border-radius:50%;background:#6363c7;border:1px solid #101010"></div>
<div class="t" style="left:1048px;top:353.62px;font-size:11.5px;line-height:11.5px;color:#e6e6e6;text-shadow:0 0.5px 1.5px rgba(0,0,0,0.55);">Displacement</div>
<svg class="a" style="left:980px;top:280px;" width="62" height="42" viewBox="0 0 62 42"><path d="M5.5 8.3 C 25.9 8.3, 36.2 33.8, 56.4 33.8" fill="none" stroke="#0c140c" stroke-width="3.4"/><path d="M5.5 8.3 C 25.9 8.3, 36.2 33.8, 56.4 33.8" fill="none" stroke="#78c878" stroke-width="1.7"/></svg>
<div class="a" style="left:980.00px;top:282.80px;width:9px;height:9px;border-radius:50%;background:#63c763;border:1px solid #101010"></div>
<div class="a" style="left:1031.10px;top:308.20px;width:9px;height:9px;border-radius:50%;background:#63c763;border:1px solid #101010"></div>
<div class="a" style="left:0px;top:979.5px;width:1920.00px;height:19.50px;background:#1d1d1d;border-radius:0px;"></div>
<svg class="a" style="left:11px;top:981px;" width="13" height="17" viewBox="0 0 13 17"><path d="M7.4 1.2 H8.5 A3.5 3.5 0 0 1 12 4.7 V12.4 A3.5 3.5 0 0 1 8.5 15.9 H4.5 A3.5 3.5 0 0 1 1 12.4 V9.6" fill="none" stroke="#a8a8a8" stroke-width="1.1"/><path d="M0.5 4.2 A3.6 3.6 0 0 1 4.1 0.6 H6.4 V8.7 H0.5 Z" fill="#a8a8a8"/></svg>
<div class="t" style="left:34.3px;top:984px;font-size:11px;line-height:11px;color:#a6a6a6;">Select</div>
<svg class="a" style="left:222px;top:981px;" width="13" height="17" viewBox="0 0 13 17"><rect x="1" y="1.2" width="11" height="14.7" rx="3.5" fill="none" stroke="#a8a8a8" stroke-width="1.1"/><rect x="5.4" y="3.2" width="2.2" height="4.8" fill="#a8a8a8"/></svg>
<div class="t" style="left:245.6px;top:984px;font-size:11px;line-height:11px;color:#a6a6a6;">Pan View</div>
<svg class="a" style="left:433px;top:981px;" width="13" height="17" viewBox="0 0 13 17"><path d="M5.6 1.2 H4.5 A3.5 3.5 0 0 0 1 4.7 V12.4 A3.5 3.5 0 0 0 4.5 15.9 H8.5 A3.5 3.5 0 0 0 12 12.4 V9.6" fill="none" stroke="#a8a8a8" stroke-width="1.1"/><path d="M12.5 4.2 A3.6 3.6 0 0 0 8.9 0.6 H6.6 V8.7 H12.5 Z" fill="#a8a8a8"/></svg>
<div class="t" style="left:456.5px;top:984px;font-size:11px;line-height:11px;color:#a6a6a6;">Node Context Menu</div>
<div class="t" style="right:11.80px;top:984px;font-size:11px;line-height:11px;color:#a6a6a6;">3.6.5</div>
</body></html>
